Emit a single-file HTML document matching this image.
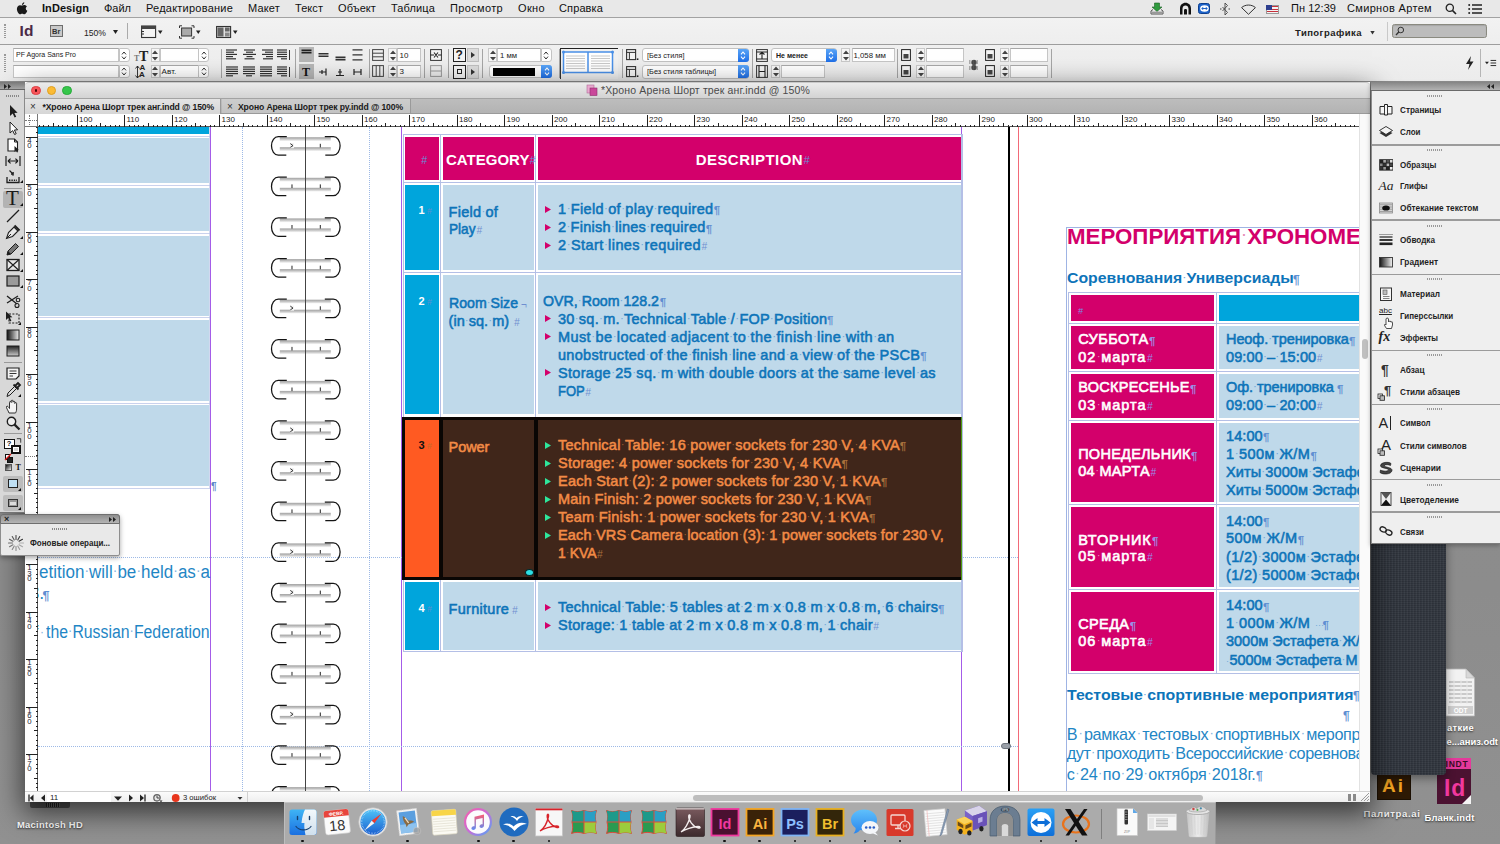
<!DOCTYPE html>
<html><head><meta charset="utf-8"><title>InDesign</title>
<style>
*{box-sizing:border-box;margin:0;padding:0}
html,body{width:1500px;height:844px;overflow:hidden}
body{position:relative;font-family:"Liberation Sans",sans-serif;background:#8d8d8d;color:#222}
.a{position:absolute}
.t{position:absolute;white-space:pre;line-height:1}
.b{font-weight:bold}
.h i{position:relative;font-style:normal}
.h i::after{content:"·";position:absolute;left:-2px;right:-2px;top:0;text-align:center;color:var(--d);letter-spacing:0;font-weight:normal;-webkit-text-stroke:0;font-size:.8em;line-height:1.25}
svg{position:absolute;overflow:visible}
/* desktop */
#desk{left:0;top:0;width:1500px;height:844px;background:linear-gradient(180deg,#8a8a8a 0%,#8c8c8c 70%,#919191 100%)}
/* menubar */
#menubar{left:0;top:0;width:1500px;height:17.5px;background:#e8e8e8;border-bottom:1px solid #a2a2a2}
#menubar .t{top:3px;font-size:11px;color:#1a1a1a}
#appbar{left:0;top:17.5px;width:1500px;height:27.5px;background:linear-gradient(#f2f2f2,#eeeeee);border-bottom:1px solid #9d9d9d}
#ctrl{left:0;top:45px;width:1500px;height:37px;background:linear-gradient(#f0f0f0,#ececec);border-bottom:1px solid #8e8e8e}
.fld{position:absolute;background:#fff;border:1px solid #c6c6c6;border-top-color:#a8a8a8;height:14px}
.sep{position:absolute;width:1px;background:#a5a5a5;top:49px;height:29px}
.stp{position:absolute;width:11px;height:13px;background:#fff;border:1px solid #c4c4c4;border-radius:0 3px 3px 0}
.bstp{position:absolute;width:11px;height:13px;background:linear-gradient(#5aa5f7,#1f6fe8);border-radius:0 3px 3px 0}
.dd{position:absolute;height:13px;background:#fff;border:1px solid #c2c2c2;border-radius:3px}
</style></head><body>
<div id="desk" class="a"></div>

<div id="menubar" class="a">
<span class="t" style='left:42.0px;top:3.00px;font-size:11px;color:#111;font-weight:bold;letter-spacing:0.068px;'>InDesign</span>
<span class="t" style='left:104.0px;top:3.00px;font-size:11px;color:#111;letter-spacing:-0.012px;'>Файл</span>
<span class="t" style='left:146.0px;top:3.00px;font-size:11px;color:#111;letter-spacing:0.229px;'>Редактирование</span>
<span class="t" style='left:248.0px;top:3.00px;font-size:11px;color:#111;letter-spacing:0.172px;'>Макет</span>
<span class="t" style='left:295.0px;top:3.00px;font-size:11px;color:#111;letter-spacing:0.059px;'>Текст</span>
<span class="t" style='left:338.0px;top:3.00px;font-size:11px;color:#111;letter-spacing:0.089px;'>Объект</span>
<span class="t" style='left:391.0px;top:3.00px;font-size:11px;color:#111;letter-spacing:0.123px;'>Таблица</span>
<span class="t" style='left:450.0px;top:3.00px;font-size:11px;color:#111;letter-spacing:0.344px;'>Просмотр</span>
<span class="t" style='left:518.0px;top:3.00px;font-size:11px;color:#111;letter-spacing:0.359px;'>Окно</span>
<span class="t" style='left:559.0px;top:3.00px;font-size:11px;color:#111;letter-spacing:0.121px;'>Справка</span>
<span class="t" style='left:1291.0px;top:3.00px;font-size:11px;color:#111;letter-spacing:0.053px;'>Пн 12:39</span>
<span class="t" style='left:1347.0px;top:3.00px;font-size:11px;color:#111;letter-spacing:0.333px;'>Смирнов Артем</span>
</div>
<div id="appbar" class="a"></div>
<div id="ctrl" class="a"></div>
<div class="a" style="left:30px;top:800px;width:40px;height:8px;background:#4d4d4d;border-radius:2px"></div><div class="a" style="left:46px;top:803px;width:14px;height:4px;background:repeating-linear-gradient(90deg,#222 0 1px,#666 1px 2px)"></div>
<span class="t" style='left:17.0px;top:820.00px;font-size:9.4px;color:#fff;font-weight:bold;letter-spacing:0.290px;text-shadow:0 1px 2px rgba(0,0,0,.7);'>Macintosh HD</span>
<svg style="left:1446px;top:669px" width="29" height="48" viewBox="0 0 29 48"><path d="M0 0H20L28.500 9V47H0Z" fill="#f2f2f2" stroke="#b5b5b5" stroke-width=".8"/><path d="M20 0V9H28.500Z" fill="#d8d8d8" stroke="#b5b5b5" stroke-width=".6"/><g stroke="#bdbdbd" stroke-width="1.600"><path d="M3 13H26M3 17H26M3 21H26M3 25H26M3 29H26M3 33H26"/></g><g stroke="#e9e9e9" stroke-width="1"><path d="M8 11V35M15 11V35M21 11V35"/></g><rect x="2" y="37" width="25" height="8" fill="#cfcfcf"/><text x="14.500" y="43.600" font-family="Liberation Sans" font-size="6.500" font-weight="bold" fill="#fff" text-anchor="middle">ODT</text></svg>
<span class="t" style='left:1447.0px;top:723.00px;font-size:9.4px;color:#fff;font-weight:bold;letter-spacing:0.303px;text-shadow:0 1px 2px rgba(0,0,0,.7);'>аткие</span>
<span class="t" style='left:1446.5px;top:737.00px;font-size:9.4px;color:#fff;font-weight:bold;letter-spacing:-0.001px;text-shadow:0 1px 2px rgba(0,0,0,.7);'>е...аниз.odt</span>
<div class="a" style="left:1377px;top:762px;width:34px;height:38px;background:#2e1a05;border:1px solid #1c1003"></div>
<span class="t" style='left:1382.0px;top:776.00px;font-size:19px;color:#f5a623;font-weight:bold;letter-spacing:2.000px;'>Ai</span>
<span class="t" style='left:1363.5px;top:809.00px;font-size:9.6px;color:#f0f0f0;font-weight:bold;letter-spacing:0.620px;text-shadow:0 1px 2px rgba(0,0,0,.7);'>Палитра.ai</span>
<div class="a" style="left:1437px;top:758px;width:34px;height:46px;background:#4b1231"></div><div class="a" style="left:1437px;top:758px;width:34px;height:11px;background:#e5399b"></div>
<span class="t" style='left:1445.5px;top:760.00px;font-size:8.5px;color:#3a0d25;font-weight:bold;letter-spacing:0.789px;'>INDT</span>
<span class="t" style='left:1444.0px;top:777.00px;font-size:23px;color:#f0389e;font-weight:bold;letter-spacing:0.773px;'>Id</span>
<svg style="left:1462px;top:795px" width="9" height="9" viewBox="0 0 9 9"><path d="M0 9L9 0V9Z" fill="#f4f4f4"/></svg>
<div class="a" style="left:1371px;top:540px;width:75px;height:235px;background:#30353d;border-radius:0 0 4px 4px;box-shadow:0 3px 10px rgba(0,0,0,.4);background-image:repeating-linear-gradient(90deg,rgba(255,255,255,.035) 0 1px,rgba(0,0,0,.05) 1px 2px,rgba(255,255,255,0) 2px 3px),repeating-linear-gradient(0deg,rgba(255,255,255,.03) 0 1px,rgba(0,0,0,.04) 1px 2px)"></div>
<span class="t" style='left:1424.5px;top:813.00px;font-size:9.4px;color:#fff;font-weight:bold;letter-spacing:0.195px;text-shadow:0 1px 2px rgba(0,0,0,.7);'>Бланк.indt</span>
<div class="a" style="left:4px;top:24px;width:2px;height:14px;border-left:1px dotted #999;border-right:1px dotted #999"></div><span class="t" style='left:19.5px;top:23.00px;font-size:15.5px;color:#4a2a47;font-weight:bold;letter-spacing:0.109px;'>Id</span><div class="a" style="left:50px;top:25px;width:13px;height:12px;background:#c9c9c9;border:1px solid #6d6d6d"></div><span class="t" style='left:52.0px;top:28.00px;font-size:7.5px;color:#333;font-weight:bold;'>Br</span><span class="t" style='left:84.0px;top:28.00px;font-size:9.5px;color:#222;transform:scaleX(0.9049);transform-origin:0 0;'>150%</span><svg style="left:112.5px;top:30px" width="5" height="4" viewBox="0 0 5 4"><path d="M0 0H5L2.5 4Z" fill="#222"/></svg><div class="a" style="left:127px;top:23px;width:1px;height:16px;background:#aaa;"></div><svg style="left:141px;top:24.5px" width="22" height="14" viewBox="0 0 22 14"><rect x=".6" y="1" width="14" height="11.5" fill="#f4f4f4" stroke="#333" stroke-width="1.1"/><rect x=".6" y="1" width="14" height="3" fill="#444"/><path d="M.6 6.5H3M.6 9H3" stroke="#333" stroke-width="1"/><path d="M17 5.5H21.5L19.25 9Z" fill="#222"/></svg><svg style="left:179px;top:24.5px" width="22" height="14" viewBox="0 0 22 14"><rect x="2.6" y="3" width="10" height="8" fill="#aaa" stroke="#333" stroke-width="1"/><path d="M.5 3V.8H3M12.5 .8H15V3M15 11V13.2H12.5M3 13.2H.5V11" fill="none" stroke="#333" stroke-width="1"/><path d="M17 5.5H21.5L19.25 9Z" fill="#222"/></svg><svg style="left:216px;top:24.5px" width="22" height="14" viewBox="0 0 22 14"><rect x=".6" y="1.5" width="14" height="11" fill="#e0e0e0" stroke="#333" stroke-width="1.1"/><rect x="1.5" y="2.5" width="6" height="9" fill="#666"/><rect x="9" y="2.5" width="4.6" height="4" fill="#666"/><rect x="9" y="7.6" width="4.6" height="3.9" fill="#888"/><path d="M17 5.5H21.5L19.25 9Z" fill="#222"/></svg><span class="t" style='left:1295.0px;top:28.00px;font-size:9.5px;color:#222;font-weight:bold;letter-spacing:0.449px;'>Типографика</span><svg style="left:1369.5px;top:30.5px" width="5" height="3.5" viewBox="0 0 5 4"><path d="M0 0H5L2.5 4Z" fill="#333"/></svg><div class="a" style="left:1386.5px;top:22px;width:1px;height:19px;background:#c9c9c9;"></div><div class="a" style="left:1392px;top:24px;width:95px;height:14px;background:#bcbcbc;border:1px solid #8a8a80;border-radius:2.5px;box-shadow:inset 0 1px 1px rgba(0,0,0,.12)"></div><svg style="left:1395px;top:26px" width="10" height="10" viewBox="0 0 10 10"><circle cx="5.8" cy="4" r="2.8" fill="none" stroke="#333" stroke-width="1"/><path d="M3.8 6L1 9" stroke="#333" stroke-width="1.3"/></svg>
<svg style="left:15.5px;top:2px" width="12" height="13" viewBox="0 0 12 13"><path d="M8.3 0.2C8.4 1.5 7.3 2.9 6 2.9C5.8 1.6 7 0.3 8.3 0.2ZM6.1 3.6C6.8 3.6 7.6 3 8.6 3.1C9.6 3.2 10.4 3.7 10.9 4.5C9.2 5.6 9.5 8 11.3 8.7C10.8 10.2 9.6 12.3 8.3 12.3C7.5 12.3 7.2 11.8 6.2 11.8C5.2 11.8 4.8 12.3 4.1 12.3C2.7 12.3 0.9 9.4 0.9 7C0.9 4.5 2.5 3.2 4 3.2C4.9 3.2 5.6 3.6 6.1 3.6Z" fill="#1a1a1a"/></svg><svg style="left:1150px;top:2px" width="14" height="13" viewBox="0 0 14 13"><path d="M4.5 1H9.5V5H12L7 9.5L2 5H4.5Z" fill="#2f9a3e" stroke="#1c5e25" stroke-width=".6"/><path d="M1 9L3 7.5M13 9L11 7.5M1 9V12H13V9" stroke="#555" stroke-width="1" fill="none"/><rect x="1.5" y="9.6" width="11" height="2" fill="#999"/></svg><svg style="left:1178.5px;top:2px" width="13" height="13" viewBox="0 0 13 13"><path d="M1 12.5V6.5C1 3 3.5 .8 6.5 .8C9.5 .8 12 3 12 6.5V12.5H9.5V6.8C9.5 4.6 8.2 3.4 6.5 3.4C4.8 3.4 3.5 4.6 3.5 6.8V12.5Z" fill="#111"/><path d="M5 12.5V8C5 6.5 8 6.5 8 8V12.5Z" fill="#111"/></svg><div class="a" style="left:1198px;top:3px;width:12px;height:11px;background:#1d63c9;border:1px solid #0d3f8e;border-radius:2.5px"></div><svg style="left:1199.5px;top:5px" width="9" height="7" viewBox="0 0 9 7"><ellipse cx="4.5" cy="3.5" rx="4.3" ry="3.3" fill="#fff"/><path d="M1.2 3.5L3.2 1.8V2.9H5.8V1.8L7.8 3.5L5.8 5.2V4.1H3.2V5.2Z" fill="#1d63c9"/></svg><svg style="left:1220px;top:3px" width="10" height="12" viewBox="0 0 10 12"><path d="M5 0V12M5 0L7.5 2.5L2.5 8M5 12L7.5 9.5L2.5 4" fill="none" stroke="#444" stroke-width=".9"/><path d="M0 6H1.5M8.5 6H10" stroke="#444" stroke-width="1"/></svg><svg style="left:1240.5px;top:3.5px" width="15" height="11" viewBox="0 0 15 11"><path d="M7.5 10.3L.6 3.6C4.3 .2 10.7 .2 14.4 3.6Z" fill="none" stroke="#333" stroke-width="1"/></svg><div class="a" style="left:1265.5px;top:4.5px;width:13.5px;height:9px;background:repeating-linear-gradient(#c8313c 0 1.3px,#f4f4f4 1.3px 2.6px);border:.5px solid #999"></div><div class="a" style="left:1265.5px;top:4.5px;width:6px;height:5px;background:#2d3f8f"></div><svg style="left:1444.5px;top:3px" width="12" height="12" viewBox="0 0 12 12"><circle cx="4.8" cy="4.8" r="3.6" fill="none" stroke="#222" stroke-width="1.3"/><path d="M7.4 7.4L11 11" stroke="#222" stroke-width="1.6"/></svg><svg style="left:1468px;top:4px" width="14" height="10" viewBox="0 0 14 10"><path d="M4 1H14M4 5H14M4 9H14" stroke="#222" stroke-width="1.5"/><circle cx="1.2" cy="1" r="1" fill="#222"/><circle cx="1.2" cy="5" r="1" fill="#222"/><circle cx="1.2" cy="9" r="1" fill="#222"/></svg>
<div class="a" style="left:4px;top:54px;width:2px;height:18px;border-left:1px dotted #999;border-right:1px dotted #999"></div><div class="fld" style="left:13px;top:48.3px;width:106px;height:13.5px"></div><div class="stp" style="left:118.5px;top:48.3px;height:13.5px"></div><svg style="left:121px;top:50.5px" width="6" height="9" viewBox="0 0 6 9"><path d="M1 3.4L3 1L5 3.4M1 5.6L3 8L5 5.6" fill="none" stroke="#333" stroke-width="1"/></svg><div class="fld" style="left:13px;top:64.6px;width:106px;height:13.5px"></div><div class="stp" style="left:118.5px;top:64.6px;height:13.5px"></div><svg style="left:121px;top:66.8px" width="6" height="9" viewBox="0 0 6 9"><path d="M1 3.4L3 1L5 3.4M1 5.6L3 8L5 5.6" fill="none" stroke="#333" stroke-width="1"/></svg><span class="t" style='left:15.5px;top:51.00px;font-size:8px;color:#222;transform:scaleX(0.8761);transform-origin:0 0;'>PF Agora Sans Pro</span><span class="t" style="left:134px;top:54.5px;font-family:'Liberation Serif';font-size:8px;font-weight:bold;color:#777">T</span><span class="t" style="left:139px;top:50px;font-family:'Liberation Serif';font-size:14px;font-weight:bold;color:#222">T</span><span class="t" style="left:139.5px;top:63.5px;font-size:8px;font-weight:bold;color:#222">A</span><span class="t" style="left:139px;top:70.5px;font-size:8px;font-weight:bold;color:#222">A</span><svg style="left:135px;top:66px" width="5" height="12" viewBox="0 0 5 12"><path d="M2.5 0V12M.5 2.5L2.5 0L4.5 2.5M.5 9.5L2.5 12L4.5 9.5" fill="none" stroke="#222" stroke-width=".9"/></svg><div class="a" style="left:150.5px;top:48.3px;width:9px;height:13.5px;background:#f6f6f6;border:1px solid #c9c9c9"></div><svg style="left:152px;top:49.6px" width="6" height="11" viewBox="0 0 6 11"><path d="M0 4H6L3 .5ZM0 7H6L3 10.5Z" fill="#444"/></svg><div class="fld" style="left:159.5px;top:48.3px;width:39px;height:13.5px"></div><div class="stp" style="left:198px;top:48.3px;height:13.5px"></div><svg style="left:200.5px;top:50.5px" width="6" height="9" viewBox="0 0 6 9"><path d="M1 3.4L3 1L5 3.4M1 5.6L3 8L5 5.6" fill="none" stroke="#333" stroke-width="1"/></svg><div class="a" style="left:150.5px;top:64.6px;width:9px;height:13.5px;background:#f6f6f6;border:1px solid #c9c9c9"></div><svg style="left:152px;top:65.9px" width="6" height="11" viewBox="0 0 6 11"><path d="M0 4H6L3 .5ZM0 7H6L3 10.5Z" fill="#444"/></svg><div class="fld" style="left:159.5px;top:64.6px;width:39px;height:13.5px"></div><div class="stp" style="left:198px;top:64.6px;height:13.5px"></div><svg style="left:200.5px;top:66.8px" width="6" height="9" viewBox="0 0 6 9"><path d="M1 3.4L3 1L5 3.4M1 5.6L3 8L5 5.6" fill="none" stroke="#333" stroke-width="1"/></svg><span class="t" style='left:161.5px;top:68.00px;font-size:8px;color:#222;letter-spacing:0.145px;'>Авт.</span><div class="sep" style="left:220.5px"></div><div class="sep" style="left:294.5px"></div><div class="sep" style="left:368.5px"></div><div class="sep" style="left:423.5px"></div><div class="sep" style="left:447.5px"></div><div class="sep" style="left:482px"></div><div class="sep" style="left:559px"></div><div class="sep" style="left:621.5px"></div><div class="sep" style="left:752px"></div><div class="sep" style="left:897px"></div><div class="sep" style="left:1051px"></div><svg style="left:225.5px;top:49px" width="13" height="11" viewBox="0 0 13 11"><path d="M0 1H11" stroke="#333" stroke-width="1.2"/><path d="M0 3.2H8" stroke="#333" stroke-width="1.2"/><path d="M0 5.4H11" stroke="#333" stroke-width="1.2"/><path d="M0 7.6H7" stroke="#333" stroke-width="1.2"/><path d="M0 9.8H10" stroke="#333" stroke-width="1.2"/></svg><svg style="left:242.5px;top:49px" width="13" height="11" viewBox="0 0 13 11"><path d="M1 1H12" stroke="#333" stroke-width="1.2"/><path d="M3 3.2H10" stroke="#333" stroke-width="1.2"/><path d="M0 5.4H13" stroke="#333" stroke-width="1.2"/><path d="M3.5 7.6H9.5" stroke="#333" stroke-width="1.2"/><path d="M1.5 9.8H11.5" stroke="#333" stroke-width="1.2"/></svg><svg style="left:259.5px;top:49px" width="13" height="11" viewBox="0 0 13 11"><path d="M2 1H13" stroke="#333" stroke-width="1.2"/><path d="M5 3.2H13" stroke="#333" stroke-width="1.2"/><path d="M2 5.4H13" stroke="#333" stroke-width="1.2"/><path d="M6 7.6H13" stroke="#333" stroke-width="1.2"/><path d="M3 9.8H13" stroke="#333" stroke-width="1.2"/></svg><svg style="left:276.5px;top:49px" width="13" height="11" viewBox="0 0 13 11"><path d="M0 1H10" stroke="#333" stroke-width="1.2"/><path d="M0 3.2H10" stroke="#333" stroke-width="1.2"/><path d="M0 5.4H10" stroke="#333" stroke-width="1.2"/><path d="M0 7.6H10" stroke="#333" stroke-width="1.2"/><path d="M4 9.8H10" stroke="#333" stroke-width="1.2"/></svg><div class="a" style="left:289px;top:49.5px;width:1.2px;height:10px;background:#333;"></div><svg style="left:225.5px;top:66px" width="13" height="11" viewBox="0 0 13 11"><path d="M0 1H12" stroke="#333" stroke-width="1.2"/><path d="M0 3.2H12" stroke="#333" stroke-width="1.2"/><path d="M0 5.4H12" stroke="#333" stroke-width="1.2"/><path d="M0 7.6H12" stroke="#333" stroke-width="1.2"/><path d="M0 9.8H7" stroke="#333" stroke-width="1.2"/></svg><svg style="left:242.5px;top:66px" width="13" height="11" viewBox="0 0 13 11"><path d="M0 1H12" stroke="#333" stroke-width="1.2"/><path d="M0 3.2H12" stroke="#333" stroke-width="1.2"/><path d="M0 5.4H12" stroke="#333" stroke-width="1.2"/><path d="M0 7.6H12" stroke="#333" stroke-width="1.2"/><path d="M3 9.8H9" stroke="#333" stroke-width="1.2"/></svg><svg style="left:259.5px;top:66px" width="13" height="11" viewBox="0 0 13 11"><path d="M0 1H12" stroke="#333" stroke-width="1.2"/><path d="M0 3.2H12" stroke="#333" stroke-width="1.2"/><path d="M0 5.4H12" stroke="#333" stroke-width="1.2"/><path d="M0 7.6H12" stroke="#333" stroke-width="1.2"/><path d="M0 9.8H12" stroke="#333" stroke-width="1.2"/></svg><svg style="left:276.5px;top:66px" width="13" height="11" viewBox="0 0 13 11"><path d="M0 1H10" stroke="#333" stroke-width="1.2"/><path d="M0 3.2H10" stroke="#333" stroke-width="1.2"/><path d="M0 5.4H10" stroke="#333" stroke-width="1.2"/><path d="M0 7.6H10" stroke="#333" stroke-width="1.2"/><path d="M4 9.8H10" stroke="#333" stroke-width="1.2"/></svg><div class="a" style="left:289px;top:66.5px;width:1.2px;height:10px;background:#333;"></div><div class="a" style="left:298.5px;top:47px;width:15.5px;height:14.5px;background:#b6b6b6;"></div><div class="a" style="left:298.5px;top:64px;width:15.5px;height:14.5px;background:#b6b6b6;"></div><svg style="left:300px;top:49px" width="70" height="12" viewBox="0 0 70 12"><path d="M1.5 1.2H11.5M1.5 3.6H11.5" stroke="#222" stroke-width="1.6"/><path d="M18.5 4.8H28.500M18.5 7.2H28.5" stroke="#333" stroke-width="1.5"/><path d="M35.500 8.400H45.5M35.5 10.800H45.5" stroke="#333" stroke-width="1.6"/><path d="M52.5 .8H62.5M52.5 5.8H62.5M52.5 10.800H62.5" stroke="#333" stroke-width="1.3"/></svg><span class="t" style="left:302px;top:66px;font-family:'Liberation Serif';font-size:12px;font-weight:bold;color:#111">T</span><svg style="left:317px;top:66px" width="50" height="12" viewBox="0 0 50 12"><path d="M2 6H9M9 2.500V9.500M5 4V8" stroke="#222" stroke-width="1.2"/><path d="M19 9.500H27M23 3V9.500M21 6H25" stroke="#222" stroke-width="1.2"/><path d="M37 3V9M37 6H44M44 3V9" stroke="#222" stroke-width="1.2"/></svg><svg style="left:372px;top:48.5px" width="12" height="12" viewBox="0 0 12 12"><rect x=".6" y=".6" width="10.800" height="10.800" fill="#f0f0f0" stroke="#444" stroke-width="1"/><path d="M.6 4.200H11.400M.6 7.800H11.400" stroke="#444" stroke-width="1"/></svg><svg style="left:372px;top:65px" width="12" height="12" viewBox="0 0 12 12"><rect x=".6" y=".6" width="10.800" height="10.800" fill="#f0f0f0" stroke="#444" stroke-width="1"/><path d="M4.200 .6V11.400M7.800 .6V11.400" stroke="#444" stroke-width="1"/></svg><div class="a" style="left:388px;top:48.3px;width:9px;height:13.5px;background:#f6f6f6;border:1px solid #c9c9c9"></div><svg style="left:389.5px;top:49.6px" width="6" height="11" viewBox="0 0 6 11"><path d="M0 4H6L3 .5ZM0 7H6L3 10.5Z" fill="#444"/></svg><div class="fld" style="left:397px;top:48.3px;width:23.5px;height:13.5px"></div><div class="a" style="left:388px;top:64.6px;width:9px;height:13.5px;background:#f6f6f6;border:1px solid #c9c9c9"></div><svg style="left:389.5px;top:65.9px" width="6" height="11" viewBox="0 0 6 11"><path d="M0 4H6L3 .5ZM0 7H6L3 10.5Z" fill="#444"/></svg><div class="fld" style="left:397px;top:64.6px;width:23.5px;height:13.5px"></div><span class="t" style='left:399.5px;top:52.00px;font-size:8px;color:#222;'>10</span><span class="t" style='left:399.5px;top:68.00px;font-size:8px;color:#222;'>3</span><svg style="left:430px;top:48.500px" width="12" height="12" viewBox="0 0 12 12"><rect x=".6" y=".6" width="10.800" height="10.800" fill="#f4f4f4" stroke="#333" stroke-width="1"/><path d="M.6 6H4M8 6H11.400M4 3.500L8 8.500M8 3.500L4 8.500" stroke="#222" stroke-width="1.100"/></svg><svg style="left:430px;top:65px" width="12" height="12" viewBox="0 0 12 12"><rect x=".6" y=".6" width="10.800" height="10.800" fill="#ececec" stroke="#999" stroke-width="1"/><path d="M.6 6H11.400" stroke="#999" stroke-width="1"/></svg><div class="a" style="left:452.500px;top:47.500px;width:13px;height:14px;background:#f4f4f4;border:1.3px solid #222"></div><span class="t" style="left:455.5px;top:48.500px;font-size:12px;font-weight:bold;color:#222">?</span><div class="a" style="left:452.500px;top:64.500px;width:13px;height:14px;background:#f4f4f4;border:1.3px solid #222"></div><div class="a" style="left:456.500px;top:69px;width:5px;height:5px;border:1px solid #222"></div><div class="a" style="left:466.5px;top:47.5px;width:12px;height:14.5px;background:#dcdcdc;border:1px solid #c0c0c0"></div><div class="a" style="left:466.5px;top:64.5px;width:12px;height:14.5px;background:#dcdcdc;border:1px solid #c0c0c0"></div><svg style="left:471px;top:51.500px" width="4" height="6" viewBox="0 0 4 6"><path d="M0 0L4 3L0 6Z" fill="#333"/></svg><svg style="left:471px;top:68.500px" width="4" height="6" viewBox="0 0 4 6"><path d="M0 0L4 3L0 6Z" fill="#333"/></svg><div class="a" style="left:488px;top:48.3px;width:9px;height:13.5px;background:#f6f6f6;border:1px solid #c9c9c9"></div><svg style="left:489.5px;top:49.6px" width="6" height="11" viewBox="0 0 6 11"><path d="M0 4H6L3 .5ZM0 7H6L3 10.5Z" fill="#444"/></svg><div class="fld" style="left:497px;top:48.3px;width:44px;height:13.5px"></div><div class="stp" style="left:540.5px;top:48.3px;height:13.5px"></div><svg style="left:543px;top:50.5px" width="6" height="9" viewBox="0 0 6 9"><path d="M1 3.4L3 1L5 3.4M1 5.6L3 8L5 5.6" fill="none" stroke="#333" stroke-width="1"/></svg><span class="t" style='left:499.5px;top:52.00px;font-size:8px;color:#222;transform:scaleX(0.9620);transform-origin:0 0;'>1 мм</span><div class="dd" style="left:489px;top:65px;width:62.500px;height:13px"></div><div class="a" style="left:493px;top:67.5px;width:42px;height:8px;background:#000;"></div><div class="bstp" style="left:541px;top:65px"></div><svg style="left:543.5px;top:67px" width="6" height="9" viewBox="0 0 6 9"><path d="M1 3.4L3 1L5 3.4M1 5.6L3 8L5 5.6" fill="none" stroke="#fff" stroke-width="1.1"/></svg><div class="a" style="left:559.500px;top:47.500px;width:58px;height:31px;background:#f1f1f1;border-top:1.5px solid #222;border-left:1.500px solid #333"></div><svg style="left:562px;top:50px" width="53" height="26" viewBox="0 0 53 26"><rect x="1.500" y="2" width="49" height="20.500" fill="#fff" stroke="#4a90e8" stroke-width="1.500"/><path d="M26 2V22.500" stroke="#4a90e8" stroke-width="1.500"/><path d="M4 6H23M4 8.500H23M4 11H23M4 13.500H23M4 16H23M4 18.500H23M29 6H48M29 8.500H48M29 11H48M29 13.500H48M29 16H48M29 18.500H48" stroke="#c9c9c9" stroke-width="1"/><circle cx="1.500" cy="2" r="1.500" fill="#4a90e8"/><circle cx="50.500" cy="2" r="1.500" fill="#4a90e8"/><circle cx="1.500" cy="22.500" r="1.500" fill="#4a90e8"/><circle cx="50.500" cy="22.500" r="1.500" fill="#4a90e8"/></svg><svg style="left:626px;top:49px" width="13" height="12" viewBox="0 0 13 12"><rect x=".6" y=".6" width="9" height="10" fill="#f4f4f4" stroke="#333" stroke-width="1.100"/><path d="M.6 3.400H9.600M3.400 3.400V10.600" stroke="#333" stroke-width="1"/><rect x="10.800" y="9.400" width="1.600" height="1.600" fill="#222"/></svg><svg style="left:626px;top:65.5px" width="13" height="12" viewBox="0 0 13 12"><rect x=".6" y=".6" width="9" height="10" fill="#f4f4f4" stroke="#333" stroke-width="1.100"/><path d="M.6 3.400H9.600M3.400 3.400V10.600" stroke="#333" stroke-width="1"/><rect x="10.800" y="9.400" width="1.600" height="1.600" fill="#222"/></svg><div class="dd" style="left:641.500px;top:48px;width:107px;height:14px"></div><div class="bstp" style="left:737.5px;top:48.5px"></div><svg style="left:740px;top:50.5px" width="6" height="9" viewBox="0 0 6 9"><path d="M1 3.4L3 1L5 3.4M1 5.6L3 8L5 5.6" fill="none" stroke="#fff" stroke-width="1.1"/></svg><div class="dd" style="left:641.500px;top:64.500px;width:107px;height:14px"></div><div class="bstp" style="left:737.5px;top:65px"></div><svg style="left:740px;top:67px" width="6" height="9" viewBox="0 0 6 9"><path d="M1 3.4L3 1L5 3.4M1 5.6L3 8L5 5.6" fill="none" stroke="#fff" stroke-width="1.1"/></svg><span class="t" style='left:647.0px;top:52.00px;font-size:7.8px;color:#222;transform:scaleX(0.9386);transform-origin:0 0;'>[Без стиля]</span><span class="t" style='left:647.0px;top:68.00px;font-size:7.8px;color:#222;transform:scaleX(0.9448);transform-origin:0 0;'>[Без стиля таблицы]</span><svg style="left:755.500px;top:48.500px" width="12" height="13" viewBox="0 0 12 13"><rect x=".6" y=".6" width="10.800" height="11.800" fill="#f4f4f4" stroke="#333" stroke-width="1"/><path d="M.6 3H11.400M.6 10H11.400M6 3.500V9.500M3.500 5.500L6 3.500L8.500 5.500" stroke="#222" stroke-width="1.100" fill="none"/></svg><svg style="left:755.500px;top:65px" width="12" height="13" viewBox="0 0 12 13"><rect x=".6" y=".6" width="10.800" height="11.800" fill="#f4f4f4" stroke="#333" stroke-width="1"/><path d="M3 .6V12.400M9 .6V12.400M3.500 6.500H8.500" stroke="#222" stroke-width="1.100" fill="none"/></svg><div class="dd" style="left:770.500px;top:48px;width:66px;height:14px"></div><div class="bstp" style="left:825.5px;top:48.5px"></div><svg style="left:828px;top:50.5px" width="6" height="9" viewBox="0 0 6 9"><path d="M1 3.4L3 1L5 3.4M1 5.6L3 8L5 5.6" fill="none" stroke="#fff" stroke-width="1.1"/></svg><span class="t" style='left:775.5px;top:52.00px;font-size:7.8px;color:#222;font-weight:bold;transform:scaleX(0.8982);transform-origin:0 0;'>Не менее</span><div class="a" style="left:841px;top:48.3px;width:9px;height:13.5px;background:#f6f6f6;border:1px solid #c9c9c9"></div><svg style="left:842.5px;top:49.6px" width="6" height="11" viewBox="0 0 6 11"><path d="M0 4H6L3 .5ZM0 7H6L3 10.5Z" fill="#444"/></svg><div class="fld" style="left:851.5px;top:48.3px;width:43px;height:13.5px"></div><span class="t" style='left:853.5px;top:52.00px;font-size:7.8px;color:#222;letter-spacing:0.012px;'>1,058 мм</span><div class="a" style="left:771px;top:64.6px;width:9px;height:13.5px;background:#f6f6f6;border:1px solid #c9c9c9"></div><svg style="left:772.5px;top:65.9px" width="6" height="11" viewBox="0 0 6 11"><path d="M0 4H6L3 .5ZM0 7H6L3 10.5Z" fill="#444"/></svg><div class="fld" style="left:780.5px;top:64.6px;width:44px;height:13.5px"></div><svg style="left:901px;top:49px" width="10" height="12" viewBox="0 0 10 12"><rect x=".6" y=".6" width="8.800" height="10.800" fill="#f4f4f4" stroke="#222" stroke-width="1"/><rect x="2.500" y="5" width="5" height="4.500" fill="#444"/></svg><div class="a" style="left:916px;top:48.3px;width:9px;height:13.5px;background:#f6f6f6;border:1px solid #c9c9c9"></div><svg style="left:917.5px;top:49.6px" width="6" height="11" viewBox="0 0 6 11"><path d="M0 4H6L3 .5ZM0 7H6L3 10.5Z" fill="#444"/></svg><div class="fld" style="left:925.5px;top:48.3px;width:38px;height:13.5px"></div><svg style="left:901px;top:65.3px" width="10" height="12" viewBox="0 0 10 12"><rect x=".6" y=".6" width="8.800" height="10.800" fill="#f4f4f4" stroke="#222" stroke-width="1"/><rect x="2.500" y="5" width="5" height="4.500" fill="#444"/></svg><div class="a" style="left:916px;top:64.6px;width:9px;height:13.5px;background:#f6f6f6;border:1px solid #c9c9c9"></div><svg style="left:917.5px;top:65.9px" width="6" height="11" viewBox="0 0 6 11"><path d="M0 4H6L3 .5ZM0 7H6L3 10.5Z" fill="#444"/></svg><div class="fld" style="left:925.5px;top:64.6px;width:38px;height:13.5px"></div><svg style="left:985px;top:49px" width="10" height="12" viewBox="0 0 10 12"><rect x=".6" y=".6" width="8.800" height="10.800" fill="#f4f4f4" stroke="#222" stroke-width="1"/><rect x="2.500" y="5" width="5" height="4.500" fill="#444"/></svg><div class="a" style="left:1000px;top:48.3px;width:9px;height:13.5px;background:#f6f6f6;border:1px solid #c9c9c9"></div><svg style="left:1001.5px;top:49.6px" width="6" height="11" viewBox="0 0 6 11"><path d="M0 4H6L3 .5ZM0 7H6L3 10.5Z" fill="#444"/></svg><div class="fld" style="left:1009.5px;top:48.3px;width:38px;height:13.5px"></div><svg style="left:985px;top:65.3px" width="10" height="12" viewBox="0 0 10 12"><rect x=".6" y=".6" width="8.800" height="10.800" fill="#f4f4f4" stroke="#222" stroke-width="1"/><rect x="2.500" y="5" width="5" height="4.500" fill="#444"/></svg><div class="a" style="left:1000px;top:64.6px;width:9px;height:13.5px;background:#f6f6f6;border:1px solid #c9c9c9"></div><svg style="left:1001.5px;top:65.9px" width="6" height="11" viewBox="0 0 6 11"><path d="M0 4H6L3 .5ZM0 7H6L3 10.5Z" fill="#444"/></svg><div class="fld" style="left:1009.5px;top:64.6px;width:38px;height:13.5px"></div><svg style="left:968px;top:58.500px" width="12" height="12" viewBox="0 0 12 12"><ellipse cx="6" cy="3.500" rx="2.600" ry="2.800" fill="#555"/><ellipse cx="6" cy="8.500" rx="2.600" ry="2.800" fill="#555"/><path d="M1 2H11M1 4H11M1 8H11M1 10H11" stroke="#333" stroke-width=".7" stroke-dasharray="1.500 1"/></svg><svg style="left:1464.5px;top:56px" width="9" height="14" viewBox="0 0 9 14"><path d="M6 0L1 8H4.500L3 14L8.500 5.500H5Z" fill="#222"/></svg><div class="a" style="left:1480px;top:49px;width:1px;height:28px;background:#b5b5b5;"></div><svg style="left:1484.5px;top:58.500px" width="12" height="8" viewBox="0 0 14 8"><path d="M0 2.500H4.500L2.250 5.500Z" fill="#222"/><path d="M6.500 1H13M6.500 4H13M6.500 7H13" stroke="#222" stroke-width="1.100"/></svg>
<div class="a" style="left:25px;top:82px;width:1345px;height:720px;background:#fff;box-shadow:0 9px 26px 2px rgba(0,0,0,.62)"></div>
<div class="a" style="left:25px;top:82px;width:1345px;height:16px;background:linear-gradient(#ebebeb,#d3d3d3);border-top:1px solid #c9c9c9;border-radius:4px 4px 0 0"></div>
<div class="a" style="left:31.2px;top:85.9px;width:9.6px;height:9.6px;border-radius:50%;background:#f8555a;border:0.5px solid #dc4045"></div><div class="a" style="left:34.6px;top:89.400px;width:2.800px;height:2.800px;border-radius:50%;background:#4a0608"></div>
<div class="a" style="left:46.8px;top:85.9px;width:9.6px;height:9.6px;border-radius:50%;background:#fbbb35;border:0.5px solid #dfa023"></div>
<div class="a" style="left:62.4px;top:85.9px;width:9.6px;height:9.6px;border-radius:50%;background:#36c64b;border:0.5px solid #27aa3a"></div>
<span class="t" style='left:601.0px;top:85.00px;font-size:10.5px;color:#4a4a4a;letter-spacing:0.140px;'>*Хроно Арена Шорт трек анг.indd @ 150%</span>
<svg style="left:586px;top:84px" width="12" height="12" viewBox="0 0 12 12"><rect x="1" y="1" width="7" height="8" fill="#e9a9cf" stroke="#b06a98" stroke-width=".6"/><rect x="4" y="4" width="7" height="7.5" fill="#c9479a" stroke="#8d2e6b" stroke-width=".6"/></svg>
<div class="a" style="left:25px;top:98px;width:1345px;height:16px;background:linear-gradient(#bdbdbd,#b3b3b3);border-top:1px solid #a3a3a3;border-bottom:1px solid #9a9a9a"></div>
<div class="a" style="left:25px;top:99px;width:196px;height:15px;background:linear-gradient(#e4e4e4,#d6d6d6);border-right:1px solid #9a9a9a"></div>
<div class="a" style="left:222px;top:99px;width:189px;height:14px;background:linear-gradient(#cdcdcd,#c3c3c3);border-right:1px solid #9a9a9a"></div>
<span class="t" style='left:30.0px;top:102.00px;font-size:10px;color:#333;'>×</span>
<span class="t" style='left:42.5px;top:103.00px;font-size:8.6px;color:#1a1a1a;font-weight:bold;letter-spacing:-0.116px;'>*Хроно Арена Шорт трек анг.indd @ 150%</span>
<span class="t" style='left:227.0px;top:102.00px;font-size:10px;color:#333;'>×</span>
<span class="t" style='left:238.0px;top:103.00px;font-size:8.6px;color:#1a1a1a;font-weight:bold;letter-spacing:-0.112px;'>Хроно Арена Шорт трек ру.indd @ 100%</span>
<div class="a" style="left:25px;top:114px;width:1334px;height:13px;background:#fff;border-bottom:1px solid #555"></div>
<div class="a" style="left:25px;top:127px;width:13px;height:664px;background:#fff;border-right:1px solid #555"></div>
<div class="a" style="left:25px;top:114px;width:13px;height:13px;background:#fff;border-right:1px solid #777;border-bottom:1px solid #777"></div>
<svg style="left:0;top:0" width="1500" height="844"><path d="M39.0 125V127M43.8 125V127M48.5 125V127M53.2 123V127M58.0 125V127M62.8 125V127M67.5 125V127M72.2 125V127M77.0 115V127M81.8 125V127M86.5 125V127M91.2 125V127M96.0 125V127M100.8 123V127M105.5 125V127M110.2 125V127M115.0 125V127M119.8 125V127M124.5 115V127M129.2 125V127M134.0 125V127M138.8 125V127M143.5 125V127M148.2 123V127M153.0 125V127M157.8 125V127M162.5 125V127M167.2 125V127M172.0 115V127M176.8 125V127M181.5 125V127M186.2 125V127M191.0 125V127M195.8 123V127M200.5 125V127M205.2 125V127M210.0 125V127M214.8 125V127M219.5 115V127M224.2 125V127M229.0 125V127M233.8 125V127M238.5 125V127M243.2 123V127M248.0 125V127M252.8 125V127M257.5 125V127M262.2 125V127M267.0 115V127M271.8 125V127M276.5 125V127M281.2 125V127M286.0 125V127M290.8 123V127M295.5 125V127M300.2 125V127M305.0 125V127M309.8 125V127M314.5 115V127M319.2 125V127M324.0 125V127M328.8 125V127M333.5 125V127M338.2 123V127M343.0 125V127M347.8 125V127M352.5 125V127M357.2 125V127M362.0 115V127M366.8 125V127M371.5 125V127M376.2 125V127M381.0 125V127M385.8 123V127M390.5 125V127M395.2 125V127M400.0 125V127M404.8 125V127M409.5 115V127M414.2 125V127M419.0 125V127M423.8 125V127M428.5 125V127M433.2 123V127M438.0 125V127M442.8 125V127M447.5 125V127M452.2 125V127M457.0 115V127M461.8 125V127M466.5 125V127M471.2 125V127M476.0 125V127M480.8 123V127M485.5 125V127M490.2 125V127M495.0 125V127M499.8 125V127M504.5 115V127M509.2 125V127M514.0 125V127M518.8 125V127M523.5 125V127M528.2 123V127M533.0 125V127M537.8 125V127M542.5 125V127M547.2 125V127M552.0 115V127M556.8 125V127M561.5 125V127M566.2 125V127M571.0 125V127M575.8 123V127M580.5 125V127M585.2 125V127M590.0 125V127M594.8 125V127M599.5 115V127M604.2 125V127M609.0 125V127M613.8 125V127M618.5 125V127M623.2 123V127M628.0 125V127M632.8 125V127M637.5 125V127M642.2 125V127M647.0 115V127M651.8 125V127M656.5 125V127M661.2 125V127M666.0 125V127M670.8 123V127M675.5 125V127M680.2 125V127M685.0 125V127M689.8 125V127M694.5 115V127M699.2 125V127M704.0 125V127M708.8 125V127M713.5 125V127M718.2 123V127M723.0 125V127M727.8 125V127M732.5 125V127M737.2 125V127M742.0 115V127M746.8 125V127M751.5 125V127M756.2 125V127M761.0 125V127M765.8 123V127M770.5 125V127M775.2 125V127M780.0 125V127M784.8 125V127M789.5 115V127M794.2 125V127M799.0 125V127M803.8 125V127M808.5 125V127M813.2 123V127M818.0 125V127M822.8 125V127M827.5 125V127M832.2 125V127M837.0 115V127M841.8 125V127M846.5 125V127M851.2 125V127M856.0 125V127M860.8 123V127M865.5 125V127M870.2 125V127M875.0 125V127M879.8 125V127M884.5 115V127M889.2 125V127M894.0 125V127M898.8 125V127M903.5 125V127M908.2 123V127M913.0 125V127M917.8 125V127M922.5 125V127M927.2 125V127M932.0 115V127M936.8 125V127M941.5 125V127M946.2 125V127M951.0 125V127M955.8 123V127M960.5 125V127M965.2 125V127M970.0 125V127M974.8 125V127M979.5 115V127M984.2 125V127M989.0 125V127M993.8 125V127M998.5 125V127M1003.2 123V127M1008.0 125V127M1012.8 125V127M1017.5 125V127M1022.2 125V127M1027.0 115V127M1031.8 125V127M1036.5 125V127M1041.2 125V127M1046.0 125V127M1050.8 123V127M1055.5 125V127M1060.2 125V127M1065.0 125V127M1069.8 125V127M1074.5 115V127M1079.2 125V127M1084.0 125V127M1088.8 125V127M1093.5 125V127M1098.2 123V127M1103.0 125V127M1107.8 125V127M1112.5 125V127M1117.2 125V127M1122.0 115V127M1126.8 125V127M1131.5 125V127M1136.2 125V127M1141.0 125V127M1145.8 123V127M1150.5 125V127M1155.2 125V127M1160.0 125V127M1164.8 125V127M1169.5 115V127M1174.2 125V127M1179.0 125V127M1183.8 125V127M1188.5 125V127M1193.2 123V127M1198.0 125V127M1202.8 125V127M1207.5 125V127M1212.2 125V127M1217.0 115V127M1221.8 125V127M1226.5 125V127M1231.2 125V127M1236.0 125V127M1240.8 123V127M1245.5 125V127M1250.2 125V127M1255.0 125V127M1259.8 125V127M1264.5 115V127M1269.2 125V127M1274.0 125V127M1278.8 125V127M1283.5 125V127M1288.2 123V127M1293.0 125V127M1297.8 125V127M1302.5 125V127M1307.2 125V127M1312.0 115V127M1316.8 125V127M1321.5 125V127M1326.2 125V127M1331.0 125V127M1335.8 123V127M1340.5 125V127M1345.2 125V127M1350.0 125V127M1354.8 125V127" stroke="#222" stroke-width="1" fill="none" shape-rendering="crispEdges"/><path d="M36 127.5H38M36 132.2H38M26 137.0H38M36 141.7H38M36 146.5H38M36 151.2H38M36 156.0H38M34 160.7H38M36 165.5H38M36 170.2H38M36 175.0H38M36 179.7H38M26 184.5H38M36 189.2H38M36 194.0H38M36 198.7H38M36 203.5H38M34 208.2H38M36 213.0H38M36 217.7H38M36 222.5H38M36 227.2H38M26 232.0H38M36 236.7H38M36 241.5H38M36 246.2H38M36 251.0H38M34 255.7H38M36 260.5H38M36 265.2H38M36 270.0H38M36 274.7H38M26 279.5H38M36 284.2H38M36 289.0H38M36 293.7H38M36 298.5H38M34 303.2H38M36 308.0H38M36 312.7H38M36 317.5H38M36 322.2H38M26 327.0H38M36 331.7H38M36 336.5H38M36 341.2H38M36 346.0H38M34 350.7H38M36 355.5H38M36 360.2H38M36 365.0H38M36 369.7H38M26 374.5H38M36 379.2H38M36 384.0H38M36 388.7H38M36 393.5H38M34 398.2H38M36 403.0H38M36 407.7H38M36 412.5H38M36 417.2H38M26 422.0H38M36 426.7H38M36 431.5H38M36 436.2H38M36 441.0H38M34 445.7H38M36 450.5H38M36 455.2H38M36 460.0H38M36 464.7H38M26 469.5H38M36 474.2H38M36 479.0H38M36 483.7H38M36 488.5H38M34 493.2H38M36 498.0H38M36 502.7H38M36 507.5H38M36 512.2H38M26 517.0H38M36 521.7H38M36 526.5H38M36 531.2H38M36 536.0H38M34 540.7H38M36 545.5H38M36 550.2H38M36 555.0H38M36 559.7H38M26 564.5H38M36 569.2H38M36 574.0H38M36 578.7H38M36 583.5H38M34 588.2H38M36 593.0H38M36 597.7H38M36 602.5H38M36 607.2H38M26 612.0H38M36 616.7H38M36 621.5H38M36 626.2H38M36 631.0H38M34 635.7H38M36 640.5H38M36 645.2H38M36 650.0H38M36 654.7H38M26 659.5H38M36 664.2H38M36 669.0H38M36 673.7H38M36 678.5H38M34 683.2H38M36 688.0H38M36 692.7H38M36 697.5H38M36 702.2H38M26 707.0H38M36 711.7H38M36 716.5H38M36 721.2H38M36 726.0H38M34 730.7H38M36 735.5H38M36 740.2H38M36 745.0H38M36 749.7H38M26 754.5H38M36 759.2H38M36 764.0H38M36 768.7H38M36 773.5H38M34 778.2H38M36 783.0H38M36 787.7H38" stroke="#222" stroke-width="1" fill="none" shape-rendering="crispEdges"/></svg>
<span class="t" style='left:79.0px;top:116.00px;font-size:8px;color:#222;'>100</span>
<span class="t" style='left:126.5px;top:116.00px;font-size:8px;color:#222;'>110</span>
<span class="t" style='left:174.0px;top:116.00px;font-size:8px;color:#222;'>120</span>
<span class="t" style='left:221.5px;top:116.00px;font-size:8px;color:#222;'>130</span>
<span class="t" style='left:269.0px;top:116.00px;font-size:8px;color:#222;'>140</span>
<span class="t" style='left:316.5px;top:116.00px;font-size:8px;color:#222;'>150</span>
<span class="t" style='left:364.0px;top:116.00px;font-size:8px;color:#222;'>160</span>
<span class="t" style='left:411.5px;top:116.00px;font-size:8px;color:#222;'>170</span>
<span class="t" style='left:459.0px;top:116.00px;font-size:8px;color:#222;'>180</span>
<span class="t" style='left:506.5px;top:116.00px;font-size:8px;color:#222;'>190</span>
<span class="t" style='left:554.0px;top:116.00px;font-size:8px;color:#222;'>200</span>
<span class="t" style='left:601.5px;top:116.00px;font-size:8px;color:#222;'>210</span>
<span class="t" style='left:649.0px;top:116.00px;font-size:8px;color:#222;'>220</span>
<span class="t" style='left:696.5px;top:116.00px;font-size:8px;color:#222;'>230</span>
<span class="t" style='left:744.0px;top:116.00px;font-size:8px;color:#222;'>240</span>
<span class="t" style='left:791.5px;top:116.00px;font-size:8px;color:#222;'>250</span>
<span class="t" style='left:839.0px;top:116.00px;font-size:8px;color:#222;'>260</span>
<span class="t" style='left:886.5px;top:116.00px;font-size:8px;color:#222;'>270</span>
<span class="t" style='left:934.0px;top:116.00px;font-size:8px;color:#222;'>280</span>
<span class="t" style='left:981.5px;top:116.00px;font-size:8px;color:#222;'>290</span>
<span class="t" style='left:1029.0px;top:116.00px;font-size:8px;color:#222;'>300</span>
<span class="t" style='left:1076.5px;top:116.00px;font-size:8px;color:#222;'>310</span>
<span class="t" style='left:1124.0px;top:116.00px;font-size:8px;color:#222;'>320</span>
<span class="t" style='left:1171.5px;top:116.00px;font-size:8px;color:#222;'>330</span>
<span class="t" style='left:1219.0px;top:116.00px;font-size:8px;color:#222;'>340</span>
<span class="t" style='left:1266.5px;top:116.00px;font-size:8px;color:#222;'>350</span>
<span class="t" style='left:1314.0px;top:116.00px;font-size:8px;color:#222;'>360</span>
<span class="t" style='left:27.3px;top:137.00px;font-size:7.8px;color:#223;transform:scaleY(.82);'>4</span>
<span class="t" style='left:27.3px;top:142.00px;font-size:7.8px;color:#223;transform:scaleY(.82);'>0</span>
<span class="t" style='left:27.3px;top:184.00px;font-size:7.8px;color:#223;transform:scaleY(.82);'>5</span>
<span class="t" style='left:27.3px;top:190.00px;font-size:7.8px;color:#223;transform:scaleY(.82);'>0</span>
<span class="t" style='left:27.3px;top:232.00px;font-size:7.8px;color:#223;transform:scaleY(.82);'>6</span>
<span class="t" style='left:27.3px;top:237.00px;font-size:7.8px;color:#223;transform:scaleY(.82);'>0</span>
<span class="t" style='left:27.3px;top:279.00px;font-size:7.8px;color:#223;transform:scaleY(.82);'>7</span>
<span class="t" style='left:27.3px;top:285.00px;font-size:7.8px;color:#223;transform:scaleY(.82);'>0</span>
<span class="t" style='left:27.3px;top:327.00px;font-size:7.8px;color:#223;transform:scaleY(.82);'>8</span>
<span class="t" style='left:27.3px;top:332.00px;font-size:7.8px;color:#223;transform:scaleY(.82);'>0</span>
<span class="t" style='left:27.3px;top:374.00px;font-size:7.8px;color:#223;transform:scaleY(.82);'>9</span>
<span class="t" style='left:27.3px;top:380.00px;font-size:7.8px;color:#223;transform:scaleY(.82);'>0</span>
<span class="t" style='left:27.3px;top:422.00px;font-size:7.8px;color:#223;transform:scaleY(.82);'>1</span>
<span class="t" style='left:27.3px;top:427.00px;font-size:7.8px;color:#223;transform:scaleY(.82);'>0</span>
<span class="t" style='left:27.3px;top:433.00px;font-size:7.8px;color:#223;transform:scaleY(.82);'>0</span>
<span class="t" style='left:27.3px;top:469.00px;font-size:7.8px;color:#223;transform:scaleY(.82);'>1</span>
<span class="t" style='left:27.3px;top:475.00px;font-size:7.8px;color:#223;transform:scaleY(.82);'>1</span>
<span class="t" style='left:27.3px;top:480.00px;font-size:7.8px;color:#223;transform:scaleY(.82);'>0</span>
<span class="t" style='left:27.3px;top:517.00px;font-size:7.8px;color:#223;transform:scaleY(.82);'>1</span>
<span class="t" style='left:27.3px;top:522.00px;font-size:7.8px;color:#223;transform:scaleY(.82);'>2</span>
<span class="t" style='left:27.3px;top:528.00px;font-size:7.8px;color:#223;transform:scaleY(.82);'>0</span>
<span class="t" style='left:27.3px;top:564.00px;font-size:7.8px;color:#223;transform:scaleY(.82);'>1</span>
<span class="t" style='left:27.3px;top:570.00px;font-size:7.8px;color:#223;transform:scaleY(.82);'>3</span>
<span class="t" style='left:27.3px;top:575.00px;font-size:7.8px;color:#223;transform:scaleY(.82);'>0</span>
<span class="t" style='left:27.3px;top:612.00px;font-size:7.8px;color:#223;transform:scaleY(.82);'>1</span>
<span class="t" style='left:27.3px;top:617.00px;font-size:7.8px;color:#223;transform:scaleY(.82);'>4</span>
<span class="t" style='left:27.3px;top:623.00px;font-size:7.8px;color:#223;transform:scaleY(.82);'>0</span>
<span class="t" style='left:27.3px;top:659.00px;font-size:7.8px;color:#223;transform:scaleY(.82);'>1</span>
<span class="t" style='left:27.3px;top:665.00px;font-size:7.8px;color:#223;transform:scaleY(.82);'>5</span>
<span class="t" style='left:27.3px;top:670.00px;font-size:7.8px;color:#223;transform:scaleY(.82);'>0</span>
<span class="t" style='left:27.3px;top:707.00px;font-size:7.8px;color:#223;transform:scaleY(.82);'>1</span>
<span class="t" style='left:27.3px;top:712.00px;font-size:7.8px;color:#223;transform:scaleY(.82);'>6</span>
<span class="t" style='left:27.3px;top:718.00px;font-size:7.8px;color:#223;transform:scaleY(.82);'>0</span>
<span class="t" style='left:27.3px;top:754.00px;font-size:7.8px;color:#223;transform:scaleY(.82);'>1</span>
<span class="t" style='left:27.3px;top:760.00px;font-size:7.8px;color:#223;transform:scaleY(.82);'>7</span>
<span class="t" style='left:27.3px;top:765.00px;font-size:7.8px;color:#223;transform:scaleY(.82);'>0</span>
<div class="a" style="left:25px;top:456px;width:12px;height:0;border-top:1px dotted #777"></div>
<div class="a" style="left:25px;top:120px;width:12px;height:0;border-top:1px dotted #777"></div><div class="a" style="left:29px;top:115px;width:0;height:12px;border-left:1px dotted #777"></div>
<div class="a" id="cv" style="left:38px;top:127px;width:1321px;height:664px;overflow:hidden;background:#fff">
<div class="a" style="left:-38px;top:-127px;width:1500px;height:844px">
<div class="a" style="left:38px;top:127px;width:170.5px;height:7px;background:#00a5dc;"></div>
<div class="a" style="left:38px;top:138.3px;width:170.5px;height:44.7px;background:#bfd9ea;"></div>
<div class="a" style="left:38px;top:187.5px;width:170.5px;height:43.7px;background:#bfd9ea;"></div>
<div class="a" style="left:38px;top:235.8px;width:170.5px;height:79.8px;background:#bfd9ea;"></div>
<div class="a" style="left:38px;top:320px;width:170.5px;height:80.8px;background:#bfd9ea;"></div>
<div class="a" style="left:38px;top:405.4px;width:170.5px;height:80.4px;background:#bfd9ea;"></div>
<div class="a" style="left:38px;top:135.5px;width:172px;height:1px;background:#b4bfe6;opacity:.7"></div>
<div class="a" style="left:38px;top:184.7px;width:172px;height:1px;background:#b4bfe6;opacity:.7"></div>
<div class="a" style="left:38px;top:233px;width:172px;height:1px;background:#b4bfe6;opacity:.7"></div>
<div class="a" style="left:38px;top:317.3px;width:172px;height:1px;background:#b4bfe6;opacity:.7"></div>
<div class="a" style="left:38px;top:402.5px;width:172px;height:1px;background:#b4bfe6;opacity:.7"></div>
<div class="a" style="left:38px;top:487.5px;width:172px;height:1px;background:#b4bfe6;opacity:.7"></div>
<div class="a" style="left:208.8px;top:127px;width:1px;height:361px;background:#b4bfe6;opacity:.6"></div>
<div class="a" style="left:210px;top:127px;width:1.3px;height:664px;background:#a45ce8;"></div>
<div class="a" style="left:400.5px;top:127px;width:1.3px;height:664px;background:#a45ce8;"></div>
<div class="a" style="left:961px;top:127px;width:1.3px;height:664px;background:#a45ce8;"></div>
<div class="a" style="left:242px;top:127px;width:0;height:664px;border-left:1px dotted #9db9e6"></div>
<div class="a" style="left:369px;top:127px;width:0;height:664px;border-left:1px dotted #9db9e6"></div>
<div class="a" style="left:38px;top:557px;width:980px;height:0;border-top:1px dotted #9db9e6"></div>
<div class="a" style="left:38px;top:746px;width:980px;height:0;border-top:1px dotted #9db9e6"></div>
<div class="a" style="left:1008.3px;top:127px;width:2.2px;height:664px;background:#000;"></div>
<div class="a" style="left:1017.8px;top:127px;width:1px;height:664px;background:#f26a78;"></div>
<span class="t" style='left:211.0px;top:482.00px;font-size:10px;color:#5b86c9;font-weight:bold;'>¶</span>
<svg style="left:0;top:0" width="1500" height="844"><defs><linearGradient id="gb" x1="0" y1="0" x2="0" y2="1"><stop offset="0" stop-color="#a2a2a2"/><stop offset=".4" stop-color="#bdbdbd"/><stop offset="1" stop-color="#f6f6f6"/></linearGradient><g id="spi"><rect x="-26" y="-8.6" width="51" height="3.800" fill="url(#gb)"/><rect x="-26" y="1.4" width="51" height="3.800" fill="url(#gb)"/><path d="M-19 -9.2H-27.500C-31.500 -9.200 -34.300 -5 -34.300 0C-34.300 5 -31.500 9.300 -27.500 9.300H-19.500" fill="none" stroke="#151515" stroke-width="1.250"/><path d="M19 -9.2H27.500C31.500 -9.200 34.300 -5 34.300 0C34.300 5 31.500 9.300 27.500 9.300H19.500" fill="none" stroke="#151515" stroke-width="1.250"/><path d="M-13.800 -2V1.600M14.500 -2V1.600" stroke="#222" stroke-width="1"/></g></defs><use href="#spi" x="305.8" y="145.8"/><rect x="290" y="143.2" width="4" height="5" fill="#f2f2f2"/><path d="M290.300 143.6L293 145.6L290.300 147.4" fill="none" stroke="#222" stroke-width=".9"/><use href="#spi" x="305.8" y="186.4"/><use href="#spi" x="305.8" y="227.0"/><use href="#spi" x="305.8" y="267.7"/><use href="#spi" x="305.8" y="308.3"/><rect x="290" y="305.7" width="4" height="5" fill="#f2f2f2"/><path d="M290.300 306.1L293 308.1L290.300 309.9" fill="none" stroke="#222" stroke-width=".9"/><use href="#spi" x="305.8" y="348.9"/><use href="#spi" x="305.8" y="389.5"/><use href="#spi" x="305.8" y="430.1"/><rect x="290" y="427.5" width="4" height="5" fill="#f2f2f2"/><path d="M290.300 427.9L293 429.9L290.300 431.7" fill="none" stroke="#222" stroke-width=".9"/><use href="#spi" x="305.8" y="470.8"/><rect x="290" y="468.2" width="4" height="5" fill="#f2f2f2"/><path d="M290.300 468.6L293 470.6L290.300 472.4" fill="none" stroke="#222" stroke-width=".9"/><use href="#spi" x="305.8" y="511.4"/><use href="#spi" x="305.8" y="552.0"/><rect x="290" y="549.4" width="4" height="5" fill="#f2f2f2"/><path d="M290.300 549.8L293 551.8L290.300 553.6" fill="none" stroke="#222" stroke-width=".9"/><use href="#spi" x="305.8" y="592.6"/><rect x="290" y="590.0" width="4" height="5" fill="#f2f2f2"/><path d="M290.300 590.4L293 592.4L290.300 594.2" fill="none" stroke="#222" stroke-width=".9"/><use href="#spi" x="305.8" y="633.2"/><use href="#spi" x="305.8" y="673.9"/><use href="#spi" x="305.8" y="714.5"/><rect x="290" y="711.9" width="4" height="5" fill="#f2f2f2"/><path d="M290.300 712.3L293 714.3L290.300 716.1" fill="none" stroke="#222" stroke-width=".9"/><use href="#spi" x="305.8" y="755.1"/><use href="#spi" x="305.8" y="795.7"/></svg>
<div class="a" style="left:305.2px;top:127px;width:1.3px;height:664px;background:#444;"></div>
<div class="a" style="left:1001px;top:743px;width:10px;height:6px;border-radius:3px;background:#9aa0a8;border:1px solid #6d737b"></div>
<span class="t h" style='left:38.5px;top:564.00px;font-size:17.6px;color:#1f86c5;transform:scaleX(0.9659);transform-origin:0 0;--d:#7fb2de;'>etition<i> </i>will<i> </i>be<i> </i>held<i> </i>as<i> </i>a</span>
<span class="t" style='left:29.5px;top:585.00px;font-size:17.6px;color:#1f86c5;'>3.</span>
<span class="t" style='left:42.5px;top:590.00px;font-size:12.5px;color:#5f8fd2;font-weight:bold;'>¶</span>
<span class="t h" style='left:46.0px;top:624.00px;font-size:17.6px;color:#1f86c5;transform:scaleX(0.8987);transform-origin:0 0;--d:#7fb2de;'>the<i> </i>Russian<i> </i>Federation</span>
<span class="t" style='left:33.5px;top:624.00px;font-size:17.6px;color:#1f86c5;'>f</span>
<span class="t" style='left:40.0px;top:626.00px;font-size:12px;color:#7fb2de;'>·</span>
<div class="a" style="left:402.5px;top:134px;width:560px;height:1.2px;background:#b4bfe6;"></div>
<div class="a" style="left:402.5px;top:181.7px;width:560px;height:1.2px;background:#b4bfe6;"></div>
<div class="a" style="left:402.5px;top:271.7px;width:560px;height:1.2px;background:#b4bfe6;"></div>
<div class="a" style="left:402.5px;top:651px;width:560px;height:1.2px;background:#b4bfe6;"></div>
<div class="a" style="left:402.5px;top:134px;width:1.2px;height:518px;background:#b4bfe6;"></div>
<div class="a" style="left:440px;top:134px;width:1.2px;height:518px;background:#b4bfe6;"></div>
<div class="a" style="left:535.3px;top:134px;width:1.2px;height:518px;background:#b4bfe6;"></div>
<div class="a" style="left:961.4px;top:134px;width:1.2px;height:518px;background:#b4bfe6;"></div>
<div class="a" style="left:405px;top:137px;width:33.6px;height:43px;background:#d3006b;"></div><div class="a" style="left:442.6px;top:137px;width:91.1px;height:43px;background:#d3006b;"></div><div class="a" style="left:538px;top:137px;width:422.6px;height:43px;background:#d3006b;"></div>
<div class="a" style="left:405px;top:184.6px;width:33.6px;height:85px;background:#00a5dc;"></div><div class="a" style="left:442.6px;top:184.6px;width:91.1px;height:85px;background:#bfd9ea;"></div><div class="a" style="left:538px;top:184.6px;width:422.6px;height:85px;background:#bfd9ea;"></div>
<div class="a" style="left:405px;top:275px;width:33.6px;height:139.4px;background:#00a5dc;"></div><div class="a" style="left:442.6px;top:275px;width:91.1px;height:139.4px;background:#bfd9ea;"></div><div class="a" style="left:538px;top:275px;width:422.6px;height:139.4px;background:#bfd9ea;"></div>
<div class="a" style="left:405px;top:582px;width:33.6px;height:67.7px;background:#00a5dc;"></div><div class="a" style="left:442.6px;top:582px;width:91.1px;height:67.7px;background:#bfd9ea;"></div><div class="a" style="left:538px;top:582px;width:422.6px;height:67.7px;background:#bfd9ea;"></div>
<div class="a" style="left:402.3px;top:416.6px;width:560px;height:163.4px;background:#0a0604;"></div>
<div class="a" style="left:405px;top:419.6px;width:33.6px;height:157.6px;background:#ff5a22;"></div>
<div class="a" style="left:442.6px;top:419.6px;width:91.1px;height:157.6px;background:#40261a;"></div>
<div class="a" style="left:538px;top:419.6px;width:422.6px;height:157.6px;background:#40261a;"></div>
<div class="a" style="left:961.2px;top:417px;width:1px;height:162.6px;background:#4f9a10;"></div>
<div class="a" style="left:524.5px;top:568.8px;width:9px;height:7px;border-radius:50%;background:#2de0e6;border:1.2px solid #04282a"></div>
<span class="t" style='left:421.0px;top:155.00px;font-size:11px;color:#6a8fd6;font-style:italic;'>#</span>
<span class="t" style='left:446.0px;top:152.00px;font-size:15px;color:#fff;font-weight:bold;letter-spacing:0.007px;'>CATEGORY</span>
<span class="t" style='left:529.6px;top:155.00px;font-size:11px;color:#6a8fd6;font-style:italic;'>#</span>
<span class="t" style='left:695.7px;top:152.00px;font-size:15px;color:#fff;font-weight:bold;letter-spacing:0.444px;'>DESCRIPTION</span>
<span class="t" style='left:803.5px;top:155.00px;font-size:11px;color:#6a8fd6;font-style:italic;'>#</span>
<span class="t" style='left:418.6px;top:205.00px;font-size:11px;color:#fff;font-weight:bold;'>1</span>
<span class="t" style='left:427.0px;top:207.00px;font-size:8.5px;color:#5d8fd0;font-style:italic;'>#</span>
<span class="t" style='left:418.6px;top:296.00px;font-size:11px;color:#fff;font-weight:bold;'>2</span>
<span class="t" style='left:427.0px;top:298.00px;font-size:8.5px;color:#5d8fd0;font-style:italic;'>#</span>
<span class="t" style='left:418.6px;top:440.00px;font-size:11px;color:#111;font-weight:bold;'>3</span>
<span class="t" style='left:427.0px;top:442.00px;font-size:8.5px;color:#c8682a;font-style:italic;'>#</span>
<span class="t" style='left:418.6px;top:603.00px;font-size:11px;color:#fff;font-weight:bold;'>4</span>
<span class="t" style='left:427.0px;top:605.00px;font-size:8.5px;color:#5d8fd0;font-style:italic;'>#</span>
<span class="t h" style='left:448.6px;top:205.00px;font-size:14.5px;color:#0d74b9;letter-spacing:0.242px;-webkit-text-stroke:0.55px currentColor;--d:#6fa8d8;'>Field<i> </i>of</span>
<span class="t h" style='left:448.6px;top:222.00px;font-size:14.5px;color:#0d74b9;transform:scaleX(0.9391);transform-origin:0 0;-webkit-text-stroke:0.55px currentColor;--d:#6fa8d8;'>Play</span>
<span class="t h" style='left:448.6px;top:296.00px;font-size:14.5px;color:#0d74b9;transform:scaleX(0.9729);transform-origin:0 0;-webkit-text-stroke:0.55px currentColor;--d:#6fa8d8;'>Room<i> </i>Size</span>
<span class="t h" style='left:448.6px;top:314.00px;font-size:14.5px;color:#0d74b9;letter-spacing:0.008px;-webkit-text-stroke:0.55px currentColor;--d:#6fa8d8;'>(in<i> </i>sq.<i> </i>m)</span>
<span class="t h" style='left:448.6px;top:440.00px;font-size:14.5px;color:#f28b46;letter-spacing:-0.062px;-webkit-text-stroke:0.55px currentColor;--d:#9a5a30;'>Power</span>
<span class="t h" style='left:448.6px;top:602.00px;font-size:14.5px;color:#0d74b9;letter-spacing:0.285px;-webkit-text-stroke:0.55px currentColor;--d:#6fa8d8;'>Furniture</span>
<span class="t" style='left:476.5px;top:226.00px;font-size:10px;color:#6f8fd0;font-style:italic;'>#</span>
<span class="t" style='left:521.0px;top:300.00px;font-size:10px;color:#6f8fd0;'>¬</span>
<span class="t" style='left:514.0px;top:318.00px;font-size:10px;color:#6f8fd0;font-style:italic;'>#</span>
<span class="t" style='left:512.0px;top:606.00px;font-size:10px;color:#6f8fd0;font-style:italic;'>#</span>
<svg style="left:544.6px;top:205.8px" width="6" height="7" viewBox="0 0 6 7"><path d="M0 0L6 3.5L0 7Z" fill="#d3006b"/></svg>
<span class="t h" style='left:558.0px;top:202.00px;font-size:14.5px;color:#0d74b9;letter-spacing:0.329px;-webkit-text-stroke:0.55px currentColor;--d:#6fa8d8;'>1<i> </i>Field<i> </i>of<i> </i>play<i> </i>required</span>
<span class="t" style='left:713.7px;top:205.00px;font-size:11.5px;color:#5f8fd2;font-weight:bold;'>¶</span>
<svg style="left:544.6px;top:224.0px" width="6" height="7" viewBox="0 0 6 7"><path d="M0 0L6 3.5L0 7Z" fill="#d3006b"/></svg>
<span class="t h" style='left:558.0px;top:220.00px;font-size:14.5px;color:#0d74b9;letter-spacing:0.245px;-webkit-text-stroke:0.55px currentColor;--d:#6fa8d8;'>2<i> </i>Finish<i> </i>lines<i> </i>required</span>
<span class="t" style='left:705.8px;top:224.00px;font-size:11.5px;color:#5f8fd2;font-weight:bold;'>¶</span>
<svg style="left:544.6px;top:242.2px" width="6" height="7" viewBox="0 0 6 7"><path d="M0 0L6 3.5L0 7Z" fill="#d3006b"/></svg>
<span class="t h" style='left:558.0px;top:238.00px;font-size:14.5px;color:#0d74b9;letter-spacing:0.418px;-webkit-text-stroke:0.55px currentColor;--d:#6fa8d8;'>2<i> </i>Start<i> </i>lines<i> </i>required</span>
<span class="t" style='left:701.5px;top:242.00px;font-size:10px;color:#6f8fd0;font-style:italic;'>#</span>
<span class="t h" style='left:543.4px;top:294.00px;font-size:14.5px;color:#0d74b9;transform:scaleX(0.9790);transform-origin:0 0;-webkit-text-stroke:0.55px currentColor;--d:#6fa8d8;'>OVR,<i> </i>Room<i> </i>128.2</span>
<span class="t" style='left:659.7px;top:297.00px;font-size:11.5px;color:#5f8fd2;font-weight:bold;'>¶</span>
<svg style="left:544.6px;top:315.4px" width="6" height="7" viewBox="0 0 6 7"><path d="M0 0L6 3.5L0 7Z" fill="#d3006b"/></svg>
<span class="t h" style='left:558.0px;top:312.00px;font-size:14.5px;color:#0d74b9;letter-spacing:0.229px;-webkit-text-stroke:0.55px currentColor;--d:#6fa8d8;'>30<i> </i>sq.<i> </i>m.<i> </i>Technical<i> </i>Table<i> </i>/<i> </i>FOP<i> </i>Position</span>
<span class="t" style='left:827.0px;top:315.00px;font-size:11.5px;color:#5f8fd2;font-weight:bold;'>¶</span>
<svg style="left:544.6px;top:333.4px" width="6" height="7" viewBox="0 0 6 7"><path d="M0 0L6 3.5L0 7Z" fill="#d3006b"/></svg>
<span class="t h" style='left:558.0px;top:330.00px;font-size:14.5px;color:#0d74b9;letter-spacing:0.398px;-webkit-text-stroke:0.55px currentColor;--d:#6fa8d8;'>Must<i> </i>be<i> </i>located<i> </i>adjacent<i> </i>to<i> </i>the<i> </i>finish<i> </i>line<i> </i>with<i> </i>an</span>
<span class="t h" style='left:558.0px;top:348.00px;font-size:14.5px;color:#0d74b9;letter-spacing:0.300px;-webkit-text-stroke:0.55px currentColor;--d:#6fa8d8;'>unobstructed<i> </i>of<i> </i>the<i> </i>finish<i> </i>line<i> </i>and<i> </i>a<i> </i>view<i> </i>of<i> </i>the<i> </i>PSCB</span>
<span class="t" style='left:920.3px;top:351.00px;font-size:11.5px;color:#5f8fd2;font-weight:bold;'>¶</span>
<svg style="left:544.6px;top:369.4px" width="6" height="7" viewBox="0 0 6 7"><path d="M0 0L6 3.5L0 7Z" fill="#d3006b"/></svg>
<span class="t h" style='left:558.0px;top:366.00px;font-size:14.5px;color:#0d74b9;letter-spacing:0.302px;-webkit-text-stroke:0.55px currentColor;--d:#6fa8d8;'>Storage<i> </i>25<i> </i>sq.<i> </i>m<i> </i>with<i> </i>double<i> </i>doors<i> </i>at<i> </i>the<i> </i>same<i> </i>level<i> </i>as</span>
<span class="t h" style='left:558.0px;top:384.00px;font-size:14.5px;color:#0d74b9;transform:scaleX(0.8990);transform-origin:0 0;-webkit-text-stroke:0.55px currentColor;--d:#6fa8d8;'>FOP</span>
<span class="t" style='left:585.3px;top:388.00px;font-size:10px;color:#6f8fd0;font-style:italic;'>#</span>
<svg style="left:544.6px;top:441.8px" width="6" height="7" viewBox="0 0 6 7"><path d="M0 0L6 3.5L0 7Z" fill="#2ee69c"/></svg>
<span class="t h" style='left:558.0px;top:438.00px;font-size:14.5px;color:#f28b46;letter-spacing:0.242px;-webkit-text-stroke:0.55px currentColor;--d:#9a5a30;'>Technical<i> </i>Table:<i> </i>16<i> </i>power<i> </i>sockets<i> </i>for<i> </i>230<i> </i>V,<i> </i>4<i> </i>KVA</span>
<span class="t" style='left:899.8px;top:441.00px;font-size:11.5px;color:#a8703c;font-weight:bold;'>¶</span>
<svg style="left:544.6px;top:459.8px" width="6" height="7" viewBox="0 0 6 7"><path d="M0 0L6 3.5L0 7Z" fill="#2ee69c"/></svg>
<span class="t h" style='left:558.0px;top:456.00px;font-size:14.5px;color:#f28b46;letter-spacing:0.243px;-webkit-text-stroke:0.55px currentColor;--d:#9a5a30;'>Storage:<i> </i>4<i> </i>power<i> </i>sockets<i> </i>for<i> </i>230<i> </i>V,<i> </i>4<i> </i>KVA</span>
<span class="t" style='left:841.5px;top:459.00px;font-size:11.5px;color:#a8703c;font-weight:bold;'>¶</span>
<svg style="left:544.6px;top:477.8px" width="6" height="7" viewBox="0 0 6 7"><path d="M0 0L6 3.5L0 7Z" fill="#2ee69c"/></svg>
<span class="t h" style='left:558.0px;top:474.00px;font-size:14.5px;color:#f28b46;letter-spacing:0.223px;-webkit-text-stroke:0.55px currentColor;--d:#9a5a30;'>Each<i> </i>Start<i> </i>(2):<i> </i>2<i> </i>power<i> </i>sockets<i> </i>for<i> </i>230<i> </i>V,<i> </i>1<i> </i>KVA</span>
<span class="t" style='left:880.9px;top:477.00px;font-size:11.5px;color:#a8703c;font-weight:bold;'>¶</span>
<svg style="left:544.6px;top:495.8px" width="6" height="7" viewBox="0 0 6 7"><path d="M0 0L6 3.5L0 7Z" fill="#2ee69c"/></svg>
<span class="t h" style='left:558.0px;top:492.00px;font-size:14.5px;color:#f28b46;letter-spacing:0.227px;-webkit-text-stroke:0.55px currentColor;--d:#9a5a30;'>Main<i> </i>Finish:<i> </i>2<i> </i>power<i> </i>sockets<i> </i>for<i> </i>230<i> </i>V,<i> </i>1<i> </i>KVA</span>
<span class="t" style='left:865.1px;top:495.00px;font-size:11.5px;color:#a8703c;font-weight:bold;'>¶</span>
<svg style="left:544.6px;top:513.8px" width="6" height="7" viewBox="0 0 6 7"><path d="M0 0L6 3.5L0 7Z" fill="#2ee69c"/></svg>
<span class="t h" style='left:558.0px;top:510.00px;font-size:14.5px;color:#f28b46;letter-spacing:0.226px;-webkit-text-stroke:0.55px currentColor;--d:#9a5a30;'>Team<i> </i>Finish:<i> </i>1<i> </i>power<i> </i>sockets<i> </i>for<i> </i>230<i> </i>V,<i> </i>1<i> </i>KVA</span>
<span class="t" style='left:869.1px;top:513.00px;font-size:11.5px;color:#a8703c;font-weight:bold;'>¶</span>
<svg style="left:544.6px;top:532.2px" width="6" height="7" viewBox="0 0 6 7"><path d="M0 0L6 3.5L0 7Z" fill="#2ee69c"/></svg>
<span class="t h" style='left:558.0px;top:528.00px;font-size:14.5px;color:#f28b46;letter-spacing:0.165px;-webkit-text-stroke:0.55px currentColor;--d:#9a5a30;'>Each<i> </i>VRS<i> </i>Camera<i> </i>location<i> </i>(3):<i> </i>1<i> </i>power<i> </i>sockets<i> </i>for<i> </i>230<i> </i>V,</span>
<span class="t h" style='left:558.0px;top:546.00px;font-size:14.5px;color:#f28b46;transform:scaleX(0.9642);transform-origin:0 0;-webkit-text-stroke:0.55px currentColor;--d:#9a5a30;'>1<i> </i>KVA</span>
<span class="t" style='left:597.1px;top:550.00px;font-size:10px;color:#a8703c;font-style:italic;'>#</span>
<svg style="left:544.6px;top:604.2px" width="6" height="7" viewBox="0 0 6 7"><path d="M0 0L6 3.5L0 7Z" fill="#d3006b"/></svg>
<span class="t h" style='left:558.0px;top:600.00px;font-size:14.5px;color:#0d74b9;letter-spacing:0.269px;-webkit-text-stroke:0.55px currentColor;--d:#6fa8d8;'>Technical<i> </i>Table:<i> </i>5<i> </i>tables<i> </i>at<i> </i>2<i> </i>m<i> </i>x<i> </i>0.8<i> </i>m<i> </i>x<i> </i>0.8<i> </i>m,<i> </i>6<i> </i>chairs</span>
<span class="t" style='left:937.9px;top:604.00px;font-size:11.5px;color:#5f8fd2;font-weight:bold;'>¶</span>
<svg style="left:544.6px;top:622.2px" width="6" height="7" viewBox="0 0 6 7"><path d="M0 0L6 3.5L0 7Z" fill="#d3006b"/></svg>
<span class="t h" style='left:558.0px;top:618.00px;font-size:14.5px;color:#0d74b9;letter-spacing:0.277px;-webkit-text-stroke:0.55px currentColor;--d:#6fa8d8;'>Storage:<i> </i>1<i> </i>table<i> </i>at<i> </i>2<i> </i>m<i> </i>x<i> </i>0.8<i> </i>m<i> </i>x<i> </i>0.8<i> </i>m,<i> </i>1<i> </i>chair</span>
<span class="t" style='left:873.2px;top:622.00px;font-size:10px;color:#6f8fd0;font-style:italic;'>#</span>
<div class="a" style="left:1065.7px;top:226.7px;width:1.2px;height:570px;background:#9fb4e4;"></div>
<div class="a" style="left:1065.7px;top:226.7px;width:300px;height:1px;background:#9fb4e4;"></div>
<span class="t h" style='left:1066.8px;top:225.00px;font-size:22.8px;color:#d3006b;font-weight:bold;transform:scaleX(0.9781);transform-origin:0 0;--d:#e58ab6;'>МЕРОПРИЯТИЯ<i> </i>ХРОНОМЕТРАЖА</span>
<span class="t h" style='left:1066.8px;top:271.00px;font-size:14.4px;color:#0d74b9;font-weight:bold;transform:scaleX(1.0974);transform-origin:0 0;--d:#6fa8d8;'>Соревнования<i> </i>Универсиады</span>
<span class="t" style='left:1293.0px;top:274.00px;font-size:12px;color:#5f8fd2;font-weight:bold;'>¶</span>
<div class="a" style="left:1068px;top:291.7px;width:300px;height:1.2px;background:#b4bfe6;"></div>
<div class="a" style="left:1068px;top:323px;width:300px;height:1.2px;background:#b4bfe6;"></div>
<div class="a" style="left:1068px;top:371px;width:300px;height:1.2px;background:#b4bfe6;"></div>
<div class="a" style="left:1068px;top:419.5px;width:300px;height:1.2px;background:#b4bfe6;"></div>
<div class="a" style="left:1068px;top:504.2px;width:300px;height:1.2px;background:#b4bfe6;"></div>
<div class="a" style="left:1068px;top:588.9px;width:300px;height:1.2px;background:#b4bfe6;"></div>
<div class="a" style="left:1068px;top:672.9px;width:300px;height:1.2px;background:#b4bfe6;"></div>
<div class="a" style="left:1068.1px;top:292px;width:1.2px;height:382px;background:#b4bfe6;"></div>
<div class="a" style="left:1215.5px;top:292px;width:1.2px;height:382px;background:#b4bfe6;"></div>
<div class="a" style="left:1070.7px;top:295.3px;width:143.1px;height:25.7px;background:#d3006b;"></div>
<div class="a" style="left:1218.5px;top:295.3px;width:146.5px;height:25.7px;background:#00a5dc;"></div>
<div class="a" style="left:1070.7px;top:326.3px;width:143.1px;height:42.7px;background:#d3006b;"></div>
<div class="a" style="left:1218.5px;top:326.3px;width:146.5px;height:42.7px;background:#bfd9ea;"></div>
<div class="a" style="left:1070.7px;top:374.3px;width:143.1px;height:43.4px;background:#d3006b;"></div>
<div class="a" style="left:1218.5px;top:374.3px;width:146.5px;height:43.4px;background:#bfd9ea;"></div>
<div class="a" style="left:1070.7px;top:422.5px;width:143.1px;height:79.8px;background:#d3006b;"></div>
<div class="a" style="left:1218.5px;top:422.5px;width:146.5px;height:79.8px;background:#bfd9ea;"></div>
<div class="a" style="left:1070.7px;top:507.2px;width:143.1px;height:80.2px;background:#d3006b;"></div>
<div class="a" style="left:1218.5px;top:507.2px;width:146.5px;height:80.2px;background:#bfd9ea;"></div>
<div class="a" style="left:1070.7px;top:591.6px;width:143.1px;height:79.8px;background:#d3006b;"></div>
<div class="a" style="left:1218.5px;top:591.6px;width:146.5px;height:79.8px;background:#bfd9ea;"></div>
<span class="t" style='left:1078.0px;top:307.00px;font-size:9px;color:#7d8fe0;font-style:italic;'>#</span>
<span class="t h" style='left:1078.2px;top:332.00px;font-size:14.5px;color:#fff;letter-spacing:0.428px;-webkit-text-stroke:0.6px currentColor;--d:#e58ab6;'>СУББОТА</span>
<span class="t" style='left:1148.9px;top:336.00px;font-size:11.5px;color:#9b8fe6;font-weight:bold;'>¶</span>
<span class="t h" style='left:1078.2px;top:350.00px;font-size:14.5px;color:#fff;letter-spacing:0.964px;-webkit-text-stroke:0.6px currentColor;--d:#e58ab6;'>02<i> </i>марта</span>
<span class="t" style='left:1146.9px;top:354.00px;font-size:10px;color:#9b8fe6;font-style:italic;'>#</span>
<span class="t h" style='left:1078.2px;top:380.00px;font-size:14.5px;color:#fff;letter-spacing:0.279px;-webkit-text-stroke:0.6px currentColor;--d:#e58ab6;'>ВОСКРЕСЕНЬЕ</span>
<span class="t" style='left:1190.1px;top:384.00px;font-size:11.5px;color:#9b8fe6;font-weight:bold;'>¶</span>
<span class="t h" style='left:1078.2px;top:398.00px;font-size:14.5px;color:#fff;letter-spacing:0.977px;-webkit-text-stroke:0.6px currentColor;--d:#e58ab6;'>03<i> </i>марта</span>
<span class="t" style='left:1147.0px;top:402.00px;font-size:10px;color:#9b8fe6;font-style:italic;'>#</span>
<span class="t h" style='left:1078.2px;top:447.00px;font-size:14.5px;color:#fff;letter-spacing:0.262px;-webkit-text-stroke:0.6px currentColor;--d:#e58ab6;'>ПОНЕДЕЛЬНИК</span>
<span class="t" style='left:1191.1px;top:451.00px;font-size:11.5px;color:#9b8fe6;font-weight:bold;'>¶</span>
<span class="t h" style='left:1078.2px;top:464.00px;font-size:14.5px;color:#fff;letter-spacing:0.339px;-webkit-text-stroke:0.6px currentColor;--d:#e58ab6;'>04<i> </i>МАРТА</span>
<span class="t" style='left:1150.4px;top:468.00px;font-size:10px;color:#9b8fe6;font-style:italic;'>#</span>
<span class="t h" style='left:1078.2px;top:533.00px;font-size:14.5px;color:#fff;letter-spacing:0.900px;-webkit-text-stroke:0.6px currentColor;--d:#e58ab6;'>ВТОРНИК</span>
<span class="t" style='left:1152.0px;top:536.00px;font-size:11.5px;color:#9b8fe6;font-weight:bold;'>¶</span>
<span class="t h" style='left:1078.2px;top:549.00px;font-size:14.5px;color:#fff;letter-spacing:0.977px;-webkit-text-stroke:0.6px currentColor;--d:#e58ab6;'>05<i> </i>марта</span>
<span class="t" style='left:1147.0px;top:553.00px;font-size:10px;color:#9b8fe6;font-style:italic;'>#</span>
<span class="t h" style='left:1078.2px;top:617.00px;font-size:14.5px;color:#fff;letter-spacing:0.378px;-webkit-text-stroke:0.6px currentColor;--d:#e58ab6;'>СРЕДА</span>
<span class="t" style='left:1129.7px;top:621.00px;font-size:11.5px;color:#9b8fe6;font-weight:bold;'>¶</span>
<span class="t h" style='left:1078.2px;top:634.00px;font-size:14.5px;color:#fff;letter-spacing:0.977px;-webkit-text-stroke:0.6px currentColor;--d:#e58ab6;'>06<i> </i>марта</span>
<span class="t" style='left:1147.0px;top:638.00px;font-size:10px;color:#9b8fe6;font-style:italic;'>#</span>
<span class="t h" style='left:1226.0px;top:332.00px;font-size:14.5px;color:#0d74b9;letter-spacing:-0.083px;-webkit-text-stroke:0.55px currentColor;--d:#6fa8d8;'>Неоф.<i> </i>тренировка</span>
<span class="t" style='left:1349.0px;top:336.00px;font-size:11.5px;color:#5f8fd2;font-weight:bold;'>¶</span>
<span class="t h" style='left:1226.0px;top:350.00px;font-size:14.5px;color:#0d74b9;letter-spacing:0.115px;-webkit-text-stroke:0.55px currentColor;--d:#6fa8d8;'>09:00<i> </i>–<i> </i>15:00</span>
<span class="t" style='left:1316.7px;top:354.00px;font-size:10px;color:#6f8fd0;font-style:italic;'>#</span>
<span class="t h" style='left:1226.0px;top:380.00px;font-size:14.5px;color:#0d74b9;letter-spacing:-0.072px;-webkit-text-stroke:0.55px currentColor;--d:#6fa8d8;'>Оф.<i> </i>тренировка</span>
<span class="t h" style='left:1226.0px;top:398.00px;font-size:14.5px;color:#0d74b9;letter-spacing:0.115px;-webkit-text-stroke:0.55px currentColor;--d:#6fa8d8;'>09:00<i> </i>–<i> </i>20:00</span>
<span class="t" style='left:1316.7px;top:402.00px;font-size:10px;color:#6f8fd0;font-style:italic;'>#</span>
<span class="t" style='left:1337.0px;top:384.00px;font-size:11.5px;color:#5f8fd2;font-weight:bold;'>¶</span>
<span class="t h" style='left:1226.0px;top:429.00px;font-size:14.5px;color:#0d74b9;letter-spacing:0.081px;-webkit-text-stroke:0.55px currentColor;--d:#6fa8d8;'>14:00</span>
<span class="t" style='left:1263.0px;top:432.00px;font-size:11.5px;color:#5f8fd2;font-weight:bold;'>¶</span>
<span class="t h" style='left:1226.0px;top:447.00px;font-size:14.5px;color:#0d74b9;letter-spacing:0.452px;-webkit-text-stroke:0.55px currentColor;--d:#6fa8d8;'>1<i> </i>500м<i> </i>Ж/М</span>
<span class="t" style='left:1310.6px;top:451.00px;font-size:11.5px;color:#5f8fd2;font-weight:bold;'>¶</span>
<span class="t h" style='left:1226.0px;top:465.00px;font-size:14.5px;color:#0d74b9;letter-spacing:0.091px;-webkit-text-stroke:0.55px currentColor;--d:#6fa8d8;'>Хиты<i> </i>3000м<i> </i>Эстафета<i> </i>Ж</span>
<span class="t h" style='left:1226.0px;top:483.00px;font-size:14.5px;color:#0d74b9;letter-spacing:0.091px;-webkit-text-stroke:0.55px currentColor;--d:#6fa8d8;'>Хиты<i> </i>5000м<i> </i>Эстафета<i> </i>М</span>
<span class="t h" style='left:1226.0px;top:514.00px;font-size:14.5px;color:#0d74b9;letter-spacing:0.081px;-webkit-text-stroke:0.55px currentColor;--d:#6fa8d8;'>14:00</span>
<span class="t" style='left:1263.0px;top:517.00px;font-size:11.5px;color:#5f8fd2;font-weight:bold;'>¶</span>
<span class="t h" style='left:1226.0px;top:531.00px;font-size:14.5px;color:#0d74b9;letter-spacing:0.464px;-webkit-text-stroke:0.55px currentColor;--d:#6fa8d8;'>500м<i> </i>Ж/М</span>
<span class="t" style='left:1297.7px;top:535.00px;font-size:11.5px;color:#5f8fd2;font-weight:bold;'>¶</span>
<span class="t h" style='left:1226.0px;top:550.00px;font-size:14.5px;color:#0d74b9;letter-spacing:0.357px;-webkit-text-stroke:0.55px currentColor;--d:#6fa8d8;'>(1/2)<i> </i>3000м<i> </i>Эстафета<i> </i>Ж</span>
<span class="t h" style='left:1226.0px;top:568.00px;font-size:14.5px;color:#0d74b9;letter-spacing:0.357px;-webkit-text-stroke:0.55px currentColor;--d:#6fa8d8;'>(1/2)<i> </i>5000м<i> </i>Эстафета<i> </i>М</span>
<span class="t h" style='left:1226.0px;top:598.00px;font-size:14.5px;color:#0d74b9;letter-spacing:0.081px;-webkit-text-stroke:0.55px currentColor;--d:#6fa8d8;'>14:00</span>
<span class="t" style='left:1263.0px;top:602.00px;font-size:11.5px;color:#5f8fd2;font-weight:bold;'>¶</span>
<span class="t h" style='left:1226.0px;top:616.00px;font-size:14.5px;color:#0d74b9;letter-spacing:0.452px;-webkit-text-stroke:0.55px currentColor;--d:#6fa8d8;'>1<i> </i>000м<i> </i>Ж/М</span>
<span class="t" style='left:1315.0px;top:621.00px;font-size:9px;color:#6fa8d8;'>···</span>
<span class="t" style='left:1322.5px;top:620.00px;font-size:11.5px;color:#5f8fd2;font-weight:bold;'>¶</span>
<span class="t h" style='left:1226.0px;top:634.00px;font-size:14.5px;color:#0d74b9;letter-spacing:-0.002px;-webkit-text-stroke:0.55px currentColor;--d:#6fa8d8;'>3000м<i> </i>Эстафета<i> </i>Ж/М</span>
<span class="t h" style='left:1229.5px;top:653.00px;font-size:14.5px;color:#0d74b9;letter-spacing:-0.038px;-webkit-text-stroke:0.55px currentColor;--d:#6fa8d8;'>5000м<i> </i>Эстафета<i> </i>М</span>
<span class="t" style='left:1226.0px;top:657.00px;font-size:9px;color:#6fa8d8;'>·</span>
<span class="t h" style='left:1066.8px;top:688.00px;font-size:14.4px;color:#0d74b9;font-weight:bold;transform:scaleX(1.1030);transform-origin:0 0;--d:#6fa8d8;'>Тестовые<i> </i>спортивные<i> </i>мероприятия</span>
<span class="t" style='left:1353.0px;top:690.00px;font-size:12px;color:#5f8fd2;font-weight:bold;'>¶</span>
<span class="t" style='left:1343.0px;top:710.00px;font-size:12px;color:#5f8fd2;font-weight:bold;'>¶</span>
<span class="t h" style='left:1066.8px;top:726.00px;font-size:16.2px;color:#1f86c5;letter-spacing:-0.353px;word-spacing:2.539px;--d:#7fb2de;'>В<i> </i>рамках<i> </i>тестовых<i> </i>спортивных<i> </i>мероприятий<i> </i>бу-</span>
<span class="t h" style='left:1066.8px;top:745.00px;font-size:16.2px;color:#1f86c5;letter-spacing:-0.439px;word-spacing:1.621px;--d:#7fb2de;'>дут<i> </i>проходить<i> </i>Всероссийские<i> </i>соревнования</span>
<span class="t h" style='left:1066.8px;top:766.00px;font-size:16.2px;color:#1f86c5;letter-spacing:-0.116px;word-spacing:0.698px;--d:#7fb2de;'>с<i> </i>24<i> </i>по<i> </i>29<i> </i>октября<i> </i>2018г.</span>
<span class="t" style='left:1256.0px;top:770.00px;font-size:12px;color:#5f8fd2;font-weight:bold;'>¶</span>
</div></div>
<div class="a" style="left:25px;top:791px;width:1345px;height:11px;background:linear-gradient(#fbfbfb,#eeeeee);border-top:1px solid #d2d2d2"></div>
<div class="a" style="left:47px;top:792px;width:64px;height:10px;background:#fff"></div>
<svg style="left:28px;top:793.500px" width="230" height="8" viewBox="0 0 230 8"><path d="M1 .5V7.500" stroke="#222" stroke-width="1.300"/><path d="M5.500 .5V7.500L1.800 4Z" fill="#222"/><path d="M17 .5V7.500L13 4Z" fill="#222"/><path d="M86 2.500H94L90 6.800Z" fill="#222"/><path d="M101 .5V7.500L105 4Z" fill="#222"/><path d="M112 .5V7.500L116 4Z" fill="#222"/><path d="M117 .5V7.500" stroke="#222" stroke-width="1.300"/><circle cx="129" cy="3.800" r="3.200" fill="#e6e6e6" stroke="#666" stroke-width="1.300"/><path d="M129 1.500V4H131.500" stroke="#333" stroke-width=".9" fill="none"/><path d="M131.500 6.500L134.500 6.500L133 8.300Z" fill="#222"/><circle cx="147.700" cy="4" r="3.900" fill="#e8351c"/><path d="M209.500 3H214.500L212 5.800Z" fill="#333"/></svg>
<span class="t" style='left:50.0px;top:794.00px;font-size:8px;color:#222;'>11</span>
<span class="t" style='left:183.0px;top:794.00px;font-size:8px;color:#222;transform:scaleX(0.9552);transform-origin:0 0;'>3 ошибок</span>
<div class="a" style="left:247px;top:792px;width:1px;height:10px;background:#d0d0d0;"></div>
<div class="a" style="left:693px;top:795px;width:510px;height:5.500px;background:#bdbdbd;border-radius:3px"></div>
<div class="a" style="left:1348px;top:793.500px;width:3px;height:7px;background:#8a8a8a"></div><div class="a" style="left:1353px;top:793.500px;width:3px;height:7px;background:#8a8a8a"></div>
<svg style="left:1361px;top:793px" width="8" height="8" viewBox="0 0 8 8"><path d="M8 0L0 8M8 3L3 8M8 6L6 8" stroke="#9a9a9a" stroke-width="1"/></svg>
<div class="a" style="left:1359px;top:114px;width:11px;height:677px;background:#fafafa;border-left:1px solid #e2e2e2"></div>
<div class="a" style="left:1361.500px;top:339px;width:6px;height:20px;background:#c0c0c0;border-radius:3px"></div>
<div class="a" style="left:0;top:82px;width:25px;height:431px;background:#d8d8d8;border-right:1px solid #8a8a8a;border-bottom:1px solid #777"></div>
<div class="a" style="left:0;top:82px;width:25px;height:8px;background:linear-gradient(#787878,#a6a6a6);border-bottom:1px solid #666"></div>
<svg style="left:4px;top:83.5px" width="8" height="5" viewBox="0 0 8 5"><path d="M0 0L3 2.5L0 5ZM4 0L7 2.5L4 5Z" fill="#222"/></svg>
<div class="a" style="left:6px;top:94.5px;width:13px;height:2px;border-top:1px dotted #888;border-bottom:1px dotted #888"></div>
<div class="a" style="left:3px;top:191px;width:20px;height:17px;background:#b3b3b3;border-radius:2px"></div>
<div class="a" style="left:2.5px;top:475.5px;width:20.5px;height:16.5px;background:#bcbcbc;border-radius:2px"></div>
<div class="a" style="left:2.5px;top:494.5px;width:20.5px;height:16.5px;background:#bcbcbc;border-radius:2px"></div>
<div class="a" style="left:4px;top:188px;width:18px;height:1px;background:#9a9a9a;"></div>
<div class="a" style="left:4px;top:362px;width:18px;height:1px;background:#9a9a9a;"></div>
<div class="a" style="left:4px;top:433px;width:18px;height:1px;background:#9a9a9a;"></div>
<svg style="left:3.5px;top:103px" width="18" height="16" viewBox="-9 -8 18 16"><path d="M-3 -6L-3 5L-0.3 2.6L1.6 6.5L3.2 5.7L1.4 2L4.6 1.8Z" fill="#1e1e1e"/></svg><svg style="left:3.5px;top:120px" width="18" height="16" viewBox="-9 -8 18 16"><path d="M-3 -6L-3 5L-0.3 2.6L1.6 6.5L3.2 5.7L1.4 2L4.6 1.8Z" fill="#fff" stroke="#1e1e1e" stroke-width="1"/></svg><svg style="left:3.5px;top:137px" width="18" height="16" viewBox="-9 -8 18 16"><path d="M-5 -6H1.5L4.5 -3V6H-5Z" fill="#fff" stroke="#1e1e1e" stroke-width="1.1"/><path d="M1.5 -6V-3H4.5" fill="none" stroke="#1e1e1e" stroke-width="1"/><path d="M1.5 1L1.5 7L3 5.6L4 7.6L5 7.1L4 5.2L5.8 5Z" fill="#1e1e1e"/></svg><svg style="left:3.5px;top:153px" width="18" height="16" viewBox="-9 -8 18 16"><path d="M-7 -5V5M7 -5V5M-5 0H5M-5 0L-2.4 -2.4M-5 0L-2.4 2.4M5 0L2.4 -2.4M5 0L2.4 2.4" stroke="#1e1e1e" stroke-width="1.2" fill="none"/></svg><svg style="left:3.5px;top:169px" width="18" height="16" viewBox="-9 -8 18 16"><path d="M-6 0V5.5H6V0" fill="none" stroke="#1e1e1e" stroke-width="1.3"/><path d="M-4 3.2H4" stroke="#1e1e1e" stroke-width="1.6" stroke-dasharray="1.4 1"/><path d="M-3.5 -6.5L0 -3L-0 -1.2 M-2 -2.8H0.2V-5" stroke="#1e1e1e" stroke-width="1.2" fill="none"/></svg><span class="t" style="left:6px;top:187.5px;font-family:'Liberation Serif';font-size:21px;color:#1a1a1a">T</span><svg style="left:3.5px;top:208px" width="18" height="16" viewBox="-9 -8 18 16"><path d="M-6 6L6 -6" stroke="#1e1e1e" stroke-width="1.2"/></svg><svg style="left:3.5px;top:224px" width="18" height="16" viewBox="-9 -8 18 16"><path d="M-6.5 6.5L-4.5 0.5L1 -5L5 -1L-0.5 4.5Z" fill="#e8e8e8" stroke="#1e1e1e" stroke-width="1.1"/><path d="M-6.5 6.5L-2 2" stroke="#1e1e1e" stroke-width="1"/><path d="M1.5 -6.5L6.5 -1.5" stroke="#1e1e1e" stroke-width="2"/></svg><svg style="left:3.5px;top:241px" width="18" height="16" viewBox="-9 -8 18 16"><path d="M-6 6L-5 2L2.5 -5.5L5.5 -2.5L-2 5Z" fill="#777" stroke="#1e1e1e" stroke-width="1"/><path d="M-6 6L-5 2L-2 5Z" fill="#1e1e1e"/></svg><svg style="left:3.5px;top:257px" width="18" height="16" viewBox="-9 -8 18 16"><rect x="-6" y="-5.5" width="12" height="11" fill="#e6e6e6" stroke="#1e1e1e" stroke-width="1.3"/><path d="M-6 -5.5L6 5.5M6 -5.5L-6 5.5" stroke="#1e1e1e" stroke-width="1.1"/></svg><svg style="left:3.5px;top:273px" width="18" height="16" viewBox="-9 -8 18 16"><rect x="-6" y="-5" width="12" height="10" fill="#9a9a9a" stroke="#1e1e1e" stroke-width="1.2"/></svg><svg style="left:3.5px;top:293px" width="18" height="16" viewBox="-9 -8 18 16"><path d="M-6 -5L4 3M-6 2L5 -5" stroke="#1e1e1e" stroke-width="1.3"/><circle cx="4" cy="4.5" r="2" fill="none" stroke="#1e1e1e" stroke-width="1.1"/><circle cx="5" cy="-1" r="1.8" fill="none" stroke="#1e1e1e" stroke-width="1.1"/></svg><svg style="left:3.5px;top:310px" width="18" height="16" viewBox="-9 -8 18 16"><rect x="-4" y="-4" width="10" height="9" fill="none" stroke="#1e1e1e" stroke-width="1.1" stroke-dasharray="2 1.4"/><path d="M-7 -6.5L-7 2L-4.8 0L-3 3.4L-1.6 2.7L-3.2 -0.6L-0.6 -0.8Z" fill="#1e1e1e"/></svg><svg style="left:3.5px;top:327px" width="18" height="16" viewBox="-9 -8 18 16"><defs><linearGradient id="tg1"><stop offset="0" stop-color="#111"/><stop offset="1" stop-color="#eee"/></linearGradient></defs><rect x="-6" y="-5" width="12" height="10" fill="url(#tg1)" stroke="#1e1e1e" stroke-width="1"/></svg><svg style="left:3.5px;top:343px" width="18" height="16" viewBox="-9 -8 18 16"><defs><linearGradient id="tg2" x1="0" y1="0" x2="0" y2="1"><stop offset="0" stop-color="#222"/><stop offset="1" stop-color="#ccc"/></linearGradient></defs><rect x="-6" y="-5" width="12" height="10" fill="url(#tg2)" stroke="#1e1e1e" stroke-width="1"/></svg><svg style="left:3.5px;top:365px" width="18" height="16" viewBox="-9 -8 18 16"><path d="M-6 -5H6V3L3 6H-6Z" fill="#f2f2f2" stroke="#1e1e1e" stroke-width="1.2"/><path d="M-3.5 -2H3.5M-3.5 0.5H3.5M-3.5 3H0" stroke="#1e1e1e" stroke-width=".9"/></svg><svg style="left:3.5px;top:382px" width="18" height="16" viewBox="-9 -8 18 16"><path d="M-6 6.5L-5 3L1.5 -3.5L3.5 -1.5L-3 5Z" fill="#ddd" stroke="#1e1e1e" stroke-width="1"/><path d="M0.5 -5.5L5.5 -0.5M2 -4L5 -7L7 -5L4 -2" stroke="#1e1e1e" stroke-width="1.8" fill="none"/></svg><svg style="left:3.5px;top:399px" width="18" height="16" viewBox="-9 -8 18 16"><path d="M-4 6C-5 3 -7 1 -6.5 -0.5C-5.5 -1.5 -4.5 0 -3.5 1.5V-4.5C-3.5 -6 -1.8 -6 -1.8 -4.5V-5.8C-1.8 -7.2 0 -7.2 0 -5.8V-4.8C0 -6.2 1.8 -6.2 1.8 -4.8V-3.5C1.8 -4.8 3.6 -4.8 3.6 -3.5V2C3.6 4 3 5 2.5 6Z" fill="#f4f4f4" stroke="#1e1e1e" stroke-width=".9"/></svg><svg style="left:3.5px;top:415px" width="18" height="16" viewBox="-9 -8 18 16"><circle cx="-1.5" cy="-1.5" r="4.2" fill="#eee" stroke="#1e1e1e" stroke-width="1.4"/><path d="M1.6 1.6L6.5 6.5" stroke="#1e1e1e" stroke-width="2.2"/></svg><div class="a" style="left:4px;top:439px;width:10.5px;height:10px;background:#fff;border:1.2px solid #111"></div><span class="t" style="left:6.8px;top:440.300px;font-size:7.500px;font-weight:bold;color:#111">?</span><div class="a" style="left:10.5px;top:444.500px;width:10px;height:9.500px;border:2px solid #111;background:#d8d8d8"></div><div class="a" style="left:12.5px;top:446.500px;width:6px;height:5.500px;border:1px solid #fff"></div><svg style="left:16px;top:437.500px" width="6" height="6" viewBox="0 0 7 7"><path d="M1 0.8H5.5V5.5M5.5 0.8" fill="none" stroke="#111" stroke-width=".9"/></svg><div class="a" style="left:4.5px;top:454px;width:5.5px;height:5.500px;background:#fff;border:1px solid #111"></div><div class="a" style="left:7px;top:457px;width:5.500px;height:5.500px;background:#222;border:1px solid #111"></div><svg style="left:4.5px;top:454px" width="6" height="6" viewBox="0 0 6 6"><path d="M0 6L6 0" stroke="#e02020" stroke-width="1.300"/></svg><div class="a" style="left:4.5px;top:464px;width:7px;height:6.500px;background:linear-gradient(135deg,#111,#eee);border:1px solid #555"></div><span class="t" style="left:15.5px;top:463.500px;font-family:'Liberation Serif';font-size:8px;font-weight:bold;color:#111">T</span><div class="a" style="left:8px;top:478.500px;width:9.500px;height:9.500px;background:#bfe0f4;border:1.3px solid #222"></div><div class="a" style="left:8px;top:498.500px;width:9.500px;height:8.500px;background:#999;border:1.3px solid #333"></div><div class="a" style="left:10px;top:501.500px;width:5.500px;height:3.500px;background:#ddd"></div><svg style="left:20px;top:180px" width="3" height="3" viewBox="0 0 3 3"><path d="M3 0V3H0Z" fill="#111"/></svg><svg style="left:20px;top:203px" width="3" height="3" viewBox="0 0 3 3"><path d="M3 0V3H0Z" fill="#111"/></svg><svg style="left:20px;top:236px" width="3" height="3" viewBox="0 0 3 3"><path d="M3 0V3H0Z" fill="#111"/></svg><svg style="left:20px;top:252px" width="3" height="3" viewBox="0 0 3 3"><path d="M3 0V3H0Z" fill="#111"/></svg><svg style="left:20px;top:269px" width="3" height="3" viewBox="0 0 3 3"><path d="M3 0V3H0Z" fill="#111"/></svg><svg style="left:20px;top:285px" width="3" height="3" viewBox="0 0 3 3"><path d="M3 0V3H0Z" fill="#111"/></svg><svg style="left:18px;top:322px" width="3" height="3" viewBox="0 0 3 3"><path d="M3 0V3H0Z" fill="#111"/></svg><svg style="left:18px;top:394px" width="3" height="3" viewBox="0 0 3 3"><path d="M3 0V3H0Z" fill="#111"/></svg><svg style="left:18px;top:487.5px" width="3" height="3" viewBox="0 0 3 3"><path d="M3 0V3H0Z" fill="#111"/></svg><svg style="left:18px;top:507px" width="3" height="3" viewBox="0 0 3 3"><path d="M3 0V3H0Z" fill="#111"/></svg>
<div class="a" style="left:0;top:514px;width:120px;height:42px;background:#e9e9e9;border:1px solid #8e8e8e;border-radius:3px 3px 2px 2px;box-shadow:0 2px 5px rgba(0,0,0,.35)"></div>
<div class="a" style="left:0;top:514px;width:120px;height:10px;background:linear-gradient(#8e8e8e,#b5b5b5);border:1px solid #6f6f6f;border-radius:3px 3px 0 0"></div>
<span class="t" style='left:4.0px;top:515.00px;font-size:9px;color:#222;font-weight:bold;'>×</span>
<svg style="left:109px;top:516.5px" width="8" height="5" viewBox="0 0 8 5"><path d="M0 0L3 2.5L0 5ZM4 0L7 2.5L4 5Z" fill="#222"/></svg>
<div class="a" style="left:52px;top:527.5px;width:15px;height:2px;border-top:1px dotted #888;border-bottom:1px dotted #888"></div>
<span class="t" style='left:29.5px;top:539.00px;font-size:8.6px;color:#222;font-weight:bold;transform:scaleX(0.9324);transform-origin:0 0;'>Фоновые операци...</span>
<svg style="left:7px;top:534px" width="18" height="18" viewBox="-9 -9 18 18"><path d="M3.50 0.00L7.50 0.00" stroke="#333" stroke-width="1.1" stroke-linecap="round" opacity="0.30"/><path d="M3.03 1.75L6.50 3.75" stroke="#333" stroke-width="1.1" stroke-linecap="round" opacity="0.36"/><path d="M1.75 3.03L3.75 6.50" stroke="#333" stroke-width="1.1" stroke-linecap="round" opacity="0.43"/><path d="M0.00 3.50L0.00 7.50" stroke="#333" stroke-width="1.1" stroke-linecap="round" opacity="0.49"/><path d="M-1.75 3.03L-3.75 6.50" stroke="#333" stroke-width="1.1" stroke-linecap="round" opacity="0.55"/><path d="M-3.03 1.75L-6.50 3.75" stroke="#333" stroke-width="1.1" stroke-linecap="round" opacity="0.62"/><path d="M-3.50 0.00L-7.50 0.00" stroke="#333" stroke-width="1.1" stroke-linecap="round" opacity="0.68"/><path d="M-3.03 -1.75L-6.50 -3.75" stroke="#333" stroke-width="1.1" stroke-linecap="round" opacity="0.75"/><path d="M-1.75 -3.03L-3.75 -6.50" stroke="#333" stroke-width="1.1" stroke-linecap="round" opacity="0.81"/><path d="M-0.00 -3.50L-0.00 -7.50" stroke="#333" stroke-width="1.1" stroke-linecap="round" opacity="0.87"/><path d="M1.75 -3.03L3.75 -6.50" stroke="#333" stroke-width="1.1" stroke-linecap="round" opacity="0.94"/><path d="M3.03 -1.75L6.50 -3.75" stroke="#333" stroke-width="1.1" stroke-linecap="round" opacity="1.00"/></svg>
<div class="a" style="left:1370.5px;top:82px;width:130px;height:461.5px;background:#efefef;border-left:1px solid #8c8c8c;border-bottom:1px solid #7d7d7d;box-shadow:-1px 2px 4px rgba(0,0,0,.25)"></div>
<div class="a" style="left:1370.5px;top:82px;width:130px;height:9px;background:linear-gradient(#858585,#b2b2b2);border-bottom:1px solid #6a6a6a"></div>
<svg style="left:1487px;top:84px" width="8" height="5" viewBox="0 0 8 5"><path d="M3 0L0 2.5L3 5ZM7 0L4 2.5L7 5Z" fill="#222"/></svg>
<div class="a" style="left:1371.5px;top:144.4px;width:128.5px;height:1.3px;background:#9b9b9b;"></div>
<div class="a" style="left:1371.5px;top:219.4px;width:128.5px;height:1.3px;background:#9b9b9b;"></div>
<div class="a" style="left:1371.5px;top:273.9px;width:128.5px;height:1.3px;background:#9b9b9b;"></div>
<div class="a" style="left:1371.5px;top:349.7px;width:128.5px;height:1.3px;background:#9b9b9b;"></div>
<div class="a" style="left:1371.5px;top:403.6px;width:128.5px;height:1.3px;background:#9b9b9b;"></div>
<div class="a" style="left:1371.5px;top:479.1px;width:128.5px;height:1.3px;background:#9b9b9b;"></div>
<div class="a" style="left:1371.5px;top:511.4px;width:128.5px;height:1.3px;background:#9b9b9b;"></div>
<div class="a" style="left:1427px;top:94.6px;width:15px;height:2px;border-top:1px dotted #999;border-bottom:1px dotted #999"></div>
<div class="a" style="left:1427px;top:148.7px;width:15px;height:2px;border-top:1px dotted #999;border-bottom:1px dotted #999"></div>
<div class="a" style="left:1427px;top:224.7px;width:15px;height:2px;border-top:1px dotted #999;border-bottom:1px dotted #999"></div>
<div class="a" style="left:1427px;top:278.3px;width:15px;height:2px;border-top:1px dotted #999;border-bottom:1px dotted #999"></div>
<div class="a" style="left:1427px;top:354px;width:15px;height:2px;border-top:1px dotted #999;border-bottom:1px dotted #999"></div>
<div class="a" style="left:1427px;top:408px;width:15px;height:2px;border-top:1px dotted #999;border-bottom:1px dotted #999"></div>
<div class="a" style="left:1427px;top:484px;width:15px;height:2px;border-top:1px dotted #999;border-bottom:1px dotted #999"></div>
<div class="a" style="left:1427px;top:516px;width:15px;height:2px;border-top:1px dotted #999;border-bottom:1px dotted #999"></div>
<span class="t" style='left:1400.0px;top:106.00px;font-size:9.2px;color:#1f1f1f;font-weight:bold;transform:scaleX(0.8870);transform-origin:0 0;'>Страницы</span>
<span class="t" style='left:1400.0px;top:128.00px;font-size:9.2px;color:#1f1f1f;font-weight:bold;transform:scaleX(0.8677);transform-origin:0 0;'>Слои</span>
<span class="t" style='left:1400.0px;top:161.00px;font-size:9.2px;color:#1f1f1f;font-weight:bold;transform:scaleX(0.8725);transform-origin:0 0;'>Образцы</span>
<span class="t" style='left:1400.0px;top:182.00px;font-size:9.2px;color:#1f1f1f;font-weight:bold;transform:scaleX(0.8560);transform-origin:0 0;'>Глифы</span>
<span class="t" style='left:1400.0px;top:204.00px;font-size:9.2px;color:#1f1f1f;font-weight:bold;transform:scaleX(0.9015);transform-origin:0 0;'>Обтекание текстом</span>
<span class="t" style='left:1400.0px;top:236.00px;font-size:9.2px;color:#1f1f1f;font-weight:bold;transform:scaleX(0.8885);transform-origin:0 0;'>Обводка</span>
<span class="t" style='left:1400.0px;top:258.00px;font-size:9.2px;color:#1f1f1f;font-weight:bold;transform:scaleX(0.9001);transform-origin:0 0;'>Градиент</span>
<span class="t" style='left:1400.0px;top:290.00px;font-size:9.2px;color:#1f1f1f;font-weight:bold;transform:scaleX(0.8948);transform-origin:0 0;'>Материал</span>
<span class="t" style='left:1400.0px;top:312.00px;font-size:9.2px;color:#1f1f1f;font-weight:bold;transform:scaleX(0.8731);transform-origin:0 0;'>Гиперссылки</span>
<span class="t" style='left:1400.0px;top:334.00px;font-size:9.2px;color:#1f1f1f;font-weight:bold;transform:scaleX(0.8530);transform-origin:0 0;'>Эффекты</span>
<span class="t" style='left:1400.0px;top:366.00px;font-size:9.2px;color:#1f1f1f;font-weight:bold;transform:scaleX(0.8981);transform-origin:0 0;'>Абзац</span>
<span class="t" style='left:1400.0px;top:388.00px;font-size:9.2px;color:#1f1f1f;font-weight:bold;transform:scaleX(0.8895);transform-origin:0 0;'>Стили абзацев</span>
<span class="t" style='left:1400.0px;top:419.00px;font-size:9.2px;color:#1f1f1f;font-weight:bold;transform:scaleX(0.8513);transform-origin:0 0;'>Символ</span>
<span class="t" style='left:1400.0px;top:442.00px;font-size:9.2px;color:#1f1f1f;font-weight:bold;transform:scaleX(0.8733);transform-origin:0 0;'>Стили символов</span>
<span class="t" style='left:1400.0px;top:464.00px;font-size:9.2px;color:#1f1f1f;font-weight:bold;transform:scaleX(0.9117);transform-origin:0 0;'>Сценарии</span>
<span class="t" style='left:1400.0px;top:496.00px;font-size:9.2px;color:#1f1f1f;font-weight:bold;transform:scaleX(0.9038);transform-origin:0 0;'>Цветоделение</span>
<span class="t" style='left:1400.0px;top:528.00px;font-size:9.2px;color:#1f1f1f;font-weight:bold;transform:scaleX(0.8649);transform-origin:0 0;'>Связи</span>
<svg style="left:1377px;top:102px" width="18" height="16" viewBox="-9 -8 18 16"><path d="M-6 -3.5H-1.5V-5.5H1.5V-3.5H6V4H1.5V5H-1.5V4H-6Z" fill="#f7f7f7" stroke="#222" stroke-width="1"/><path d="M-1.5 -3.5V4M1.5 -3.5V4" stroke="#222" stroke-width=".9"/></svg><svg style="left:1377px;top:124px" width="18" height="16" viewBox="-9 -8 18 16"><path d="M0 -5.5L6.5 -1.5L0 2.5L-6.5 -1.5Z" fill="#f4f4f4" stroke="#222" stroke-width=".9"/><path d="M-6.5 1L0 5L6.5 1L4 -0.3L0 2.5L-4 -0.3Z" fill="#333"/></svg><svg style="left:1377px;top:156.5px" width="18" height="16" viewBox="-9 -8 18 16"><rect x="-6.8" y="-5.8" width="13.8" height="11.4" fill="#222"/><rect x="-6" y="-5" width="2.6" height="2.6" fill="#222"/><rect x="-2.7" y="-5" width="2.6" height="2.6" fill="#aaa"/><rect x="0.6" y="-5" width="2.6" height="2.6" fill="#555"/><rect x="3.9" y="-5" width="2.6" height="2.6" fill="#ddd"/><rect x="-6" y="-1.5" width="2.6" height="2.6" fill="#888"/><rect x="-2.7" y="-1.5" width="2.6" height="2.6" fill="#333"/><rect x="0.6" y="-1.5" width="2.6" height="2.6" fill="#bbb"/><rect x="3.9" y="-1.5" width="2.6" height="2.6" fill="#444"/><rect x="-6" y="2" width="2.6" height="2.6" fill="#333"/><rect x="-2.7" y="2" width="2.6" height="2.6" fill="#999"/><rect x="0.6" y="2" width="2.6" height="2.6" fill="#222"/><rect x="3.9" y="2" width="2.6" height="2.6" fill="#eee"/></svg><span class="t" style="left:1378.5px;top:179px;font-family:'Liberation Serif';font-style:italic;font-size:13.5px;color:#222">Aa</span><svg style="left:1377px;top:200px" width="18" height="16" viewBox="-9 -8 18 16"><rect x="-6.5" y="-5" width="13" height="10" fill="#ddd" stroke="#888" stroke-width=".8"/><path d="M-6 -3.2H6M-6 -1H6M-6 1.2H6M-6 3.4H6" stroke="#888" stroke-width=".8"/><ellipse cx="0" cy="0" rx="3.8" ry="2.6" fill="#111"/></svg><svg style="left:1377px;top:232px" width="18" height="16" viewBox="-9 -8 18 16"><path d="M-6.5 -5.5H6.5" stroke="#222" stroke-width=".8" stroke-dasharray="1 1"/><path d="M-6.5 -3H6.5" stroke="#222" stroke-width="1.2"/><path d="M-6.5 0H6.5" stroke="#222" stroke-width="1.8"/><path d="M-6.5 3.8H6.5" stroke="#222" stroke-width="2.6"/></svg><svg style="left:1377px;top:254px" width="18" height="16" viewBox="-9 -8 18 16"><defs><linearGradient id="pg1"><stop offset="0" stop-color="#111"/><stop offset="1" stop-color="#f4f4f4"/></linearGradient></defs><rect x="-6.5" y="-4.5" width="13" height="9.5" fill="url(#pg1)" stroke="#333" stroke-width=".9"/></svg><svg style="left:1377px;top:286px" width="18" height="16" viewBox="-9 -8 18 16"><rect x="-5.5" y="-6" width="11" height="12.5" fill="#f6f6f6" stroke="#333" stroke-width="1"/><rect x="-3" y="-4" width="4" height="4.5" fill="#bbb" stroke="#555" stroke-width=".6"/><path d="M-3 2.5H3.5M-3 4.5H3.5" stroke="#666" stroke-width=".8"/></svg><span class="t" style="left:1379px;top:306.500px;font-size:8px;color:#222;text-decoration:underline">abc</span><svg style="left:1379px;top:313.5px" width="18" height="16" viewBox="-9 -8 18 16"><path d="M-2 -3V3C-3 2 -4 2.5 -3.5 3.5L-1.5 6.5H3.5L4.5 3V0.5C4.5 -0.5 3.3 -0.5 3.3 0.3C3.3 -0.9 2 -0.9 2 0C2 -1.2 0.5 -1.2 0.5 -0.2V-3C0.5 -4.2 -2 -4.2 -2 -3Z" fill="#fafafa" stroke="#222" stroke-width=".8"/></svg><span class="t" style="left:1378.5px;top:330px;font-family:'Liberation Serif';font-style:italic;font-weight:bold;font-size:14px;color:#222">fx</span><span class="t" style="left:1381px;top:362.5px;font-size:14px;font-weight:bold;color:#333">¶</span><span class="t" style="left:1384px;top:384px;font-size:13px;font-weight:bold;color:#333">¶</span><svg style="left:1372px;top:387.5px" width="18" height="16" viewBox="-9 -8 18 16"><rect x="-3" y="-2" width="4.5" height="4.5" fill="#eee" stroke="#222" stroke-width=".8"/><rect x="-1" y="-0.2" width="4.5" height="4.5" fill="#bbb" stroke="#222" stroke-width=".8"/></svg><span class="t" style="left:1378.5px;top:415.5px;font-size:14.5px;color:#222">A</span><div class="a" style="left:1389.5px;top:416px;width:1.3px;height:14px;background:#222"></div><span class="t" style="left:1381px;top:436.5px;font-size:15px;color:#222">A</span><svg style="left:1372px;top:442.5px" width="18" height="16" viewBox="-9 -8 18 16"><rect x="-3" y="-2" width="4.5" height="4.5" fill="#eee" stroke="#222" stroke-width=".8"/><rect x="-1" y="-0.2" width="4.5" height="4.5" fill="#bbb" stroke="#222" stroke-width=".8"/></svg><svg style="left:1377px;top:459.6px" width="18" height="16" viewBox="-9 -8 18 16"><path d="M5 -4.5C3 -6.5 -5 -6 -5.5 -2.5C-6 0.5 3 0 2.5 2C2 3.5 -3 3.5 -5.5 2L-6 4.5C-3 7 5.5 6.5 6 2.5C6.5 -1 -2 -0.5 -1.5 -2.5C-1 -3.8 3 -3.5 4.5 -2.5Z" fill="#444" stroke="#111" stroke-width=".6"/></svg><svg style="left:1377px;top:491.3px" width="18" height="16" viewBox="-9 -8 18 16"><rect x="-5" y="-6.5" width="10" height="13" fill="#f0f0f0" stroke="#333" stroke-width=".9"/><path d="M-5 -6.5L0 0L5 -6.5Z" fill="#555"/><path d="M-5 6.5L0 0.5L5 6.5Z" fill="#111"/></svg><svg style="left:1377px;top:523.3px" width="18" height="16" viewBox="-9 -8 18 16"><ellipse cx="-2.8" cy="-1.5" rx="3.3" ry="2.4" fill="none" stroke="#222" stroke-width="1.3" transform="rotate(25 -2.8 -1.5)"/><ellipse cx="2.8" cy="1.5" rx="3.3" ry="2.4" fill="none" stroke="#222" stroke-width="1.3" transform="rotate(25 2.8 1.5)"/></svg>
<div class="a" style="left:284px;top:802px;width:932px;height:42px;background:#ababab;border-top:1px solid #c4c4c4;border-left:1px solid #bdbdbd;border-right:1px solid #9a9a9a"></div>
<svg style="left:287.6px;top:806.6px" width="30" height="30" viewBox="0 0 30 30"><defs><linearGradient id="fa" x1="0" y1="0" x2="0" y2="1"><stop offset="0" stop-color="#3fb4f5"/><stop offset="1" stop-color="#1a6fe0"/></linearGradient><linearGradient id="fb" x1="0" y1="0" x2="0" y2="1"><stop offset="0" stop-color="#f4f8fb"/><stop offset="1" stop-color="#cfe0ee"/></linearGradient></defs><rect x="1.500" y="2.500" width="27" height="25.500" rx="2.500" fill="url(#fa)"/><path d="M17 2.500H26C27.500 2.500 28.500 3.500 28.500 5V25.500C28.500 27 27.500 28 26 28H17.500C16.500 22 16 19 16.500 16H13.500C14 10 15.500 5.500 17 2.500Z" fill="url(#fb)"/><path d="M8 19.500C11.500 24 19.500 24 23 19.500" fill="none" stroke="#163d6b" stroke-width="1.200" stroke-linecap="round"/><path d="M9.500 9.500V12.500M21.500 9.500V12.500" stroke="#163d6b" stroke-width="1.400" stroke-linecap="round"/></svg><div class="a" style="left:301.4px;top:839.600px;width:2.400px;height:2.400px;border-radius:50%;background:#111"></div><svg style="left:322.4px;top:806.6px" width="30" height="30" viewBox="0 0 30 30"><g transform="rotate(-6 15 15)"><rect x="2.500" y="3" width="25" height="24" rx="2.500" fill="#fbfbfb" stroke="#c9c9c9" stroke-width=".6"/><path d="M2.500 9.500V5.500C2.500 4 3.500 3 5 3H25C26.500 3 27.500 4 27.500 5.500V9.500Z" fill="#e8453c"/><text x="15" y="8.300" font-family="Liberation Sans" font-size="4.800" font-weight="bold" fill="#fff" text-anchor="middle">ФЕВР.</text><text x="15" y="23.500" font-family="Liberation Sans" font-size="14.500" fill="#333" text-anchor="middle">18</text></g></svg><svg style="left:357.8px;top:806.6px" width="30" height="30" viewBox="0 0 30 30"><defs><linearGradient id="sa" x1="0" y1="0" x2="0" y2="1"><stop offset="0" stop-color="#4fc3f7"/><stop offset="1" stop-color="#1a5fd0"/></linearGradient></defs><circle cx="15" cy="15" r="14.300" fill="#e9e9e9" stroke="#c0c0c0" stroke-width=".6"/><circle cx="15" cy="15" r="12.600" fill="url(#sa)"/><circle cx="15" cy="15" r="11.300" fill="none" stroke="#cfe8fb" stroke-width="1.400" stroke-dasharray=".5 1.100" opacity=".8"/><path d="M23.500 6.500L16.300 16.300L13.700 13.700Z" fill="#f0392b"/><path d="M6.500 23.500L13.700 13.700L16.300 16.300Z" fill="#f5f5f5"/></svg><div class="a" style="left:371.6px;top:839.600px;width:2.400px;height:2.400px;border-radius:50%;background:#111"></div><svg style="left:392.6px;top:806.6px" width="30" height="30" viewBox="0 0 30 30"><g transform="rotate(-7 15 15)"><rect x="5" y="2.500" width="20" height="25" fill="#f3f3f3" stroke="#cfcfcf" stroke-width=".7" stroke-dasharray="1.500 .7"/><rect x="6.800" y="4.300" width="16.400" height="21.400" fill="#5b9fdf"/><rect x="6.800" y="17" width="16.400" height="8.700" fill="#8ec2ee"/><path d="M10.500 8.500C12.500 10.500 14 11 15.500 13.500C17 14 19.500 13.500 21 15.500C19 16.500 17 17 15 17.500L13 20L12.500 17C11 15 10 12 10.500 8.500Z" fill="#8a6a42"/><path d="M12.500 10.500C13.500 12.500 14.500 14 15.500 16" stroke="#e9dcc4" stroke-width="1.300"/></g><circle cx="24" cy="24" r="3.800" fill="#9a9a9a" opacity=".75" stroke="#d0d0d0" stroke-width=".6"/></svg><div class="a" style="left:406.4px;top:839.600px;width:2.400px;height:2.400px;border-radius:50%;background:#111"></div><svg style="left:428.8px;top:806.6px" width="30" height="30" viewBox="0 0 30 30"><g transform="rotate(-4 15 15)"><rect x="3" y="3" width="24.500" height="24.500" rx="1.500" fill="#fbfaf3" stroke="#d6d1bd" stroke-width=".7"/><path d="M3 8.500V4.500C3 3.600 3.700 3 4.500 3H26C26.900 3 27.500 3.600 27.500 4.500V8.500Z" fill="#f8d548"/><g stroke="#dcd8c7" stroke-width=".6"><path d="M4 11.500H26.500M4 14H26.500M4 16.500H26.500M4 19H26.500M4 21.500H26.500M4 24H26.500"/></g></g></svg><svg style="left:463.4px;top:806.6px" width="30" height="30" viewBox="0 0 30 30"><defs><linearGradient id="it" x1="0" y1="0" x2="1" y2="1"><stop offset="0" stop-color="#f95fa8"/><stop offset=".5" stop-color="#c86dd7"/><stop offset="1" stop-color="#4aa8f7"/></linearGradient><linearGradient id="it2" x1="0" y1="0" x2="0" y2="1"><stop offset="0" stop-color="#fb5c74"/><stop offset="1" stop-color="#5c8cf5"/></linearGradient></defs><circle cx="15" cy="15" r="14" fill="url(#it)"/><circle cx="15" cy="15" r="11.800" fill="#fbfbfd"/><path d="M11.500 9.800L21 7.500V18.500C21 21.500 16.500 21.800 16.500 19.300C16.500 17.600 18.800 17 19.600 17.300V11L12.900 12.600V20.500C12.900 23.500 8.400 23.800 8.400 21.300C8.400 19.600 10.700 19 11.500 19.300Z" fill="url(#it2)"/></svg><div class="a" style="left:477.2px;top:839.600px;width:2.400px;height:2.400px;border-radius:50%;background:#111"></div><svg style="left:498.6px;top:806.6px" width="30" height="30" viewBox="0 0 30 30"><circle cx="15" cy="15" r="14.600" fill="#1f6bbf"/><path d="M4 17.500C8 15.500 11.500 16.500 14.500 19.500C18 15.500 23 14.500 28 17C24 16.800 19.500 19 15.500 24C12 19.500 8.500 17.800 4 17.500Z" fill="#fff"/><path d="M11.500 9.500C14 8.500 16 9.200 17.500 11C19.500 8.800 22.500 8.300 25 9.600C22.500 9.700 20 11.200 18 14C16.200 11.500 14 10 11.500 9.500Z" fill="#fff"/></svg><div class="a" style="left:512.4px;top:839.600px;width:2.400px;height:2.400px;border-radius:50%;background:#111"></div><svg style="left:533.8px;top:806.6px" width="30" height="30" viewBox="0 0 30 30"><rect x="1.500" y="1.500" width="27" height="27.500" fill="#f7f7f7" stroke="#c4c4c4" stroke-width=".8"/><rect x="1.500" y="1.500" width="27" height="1.800" fill="#d8232a"/><path d="M6 24C9.500 22 13 16 14.500 9.500C15 7.200 13.500 6.500 13.200 8.500C12.800 12.500 17.500 19.500 23 20.500C25.500 20.800 25 19 22.500 19C17.500 19 9.500 21.500 6 24Z" fill="none" stroke="#d8232a" stroke-width="1.400"/></svg><div class="a" style="left:547.6px;top:839.600px;width:2.400px;height:2.400px;border-radius:50%;background:#111"></div><svg style="left:569px;top:806.6px" width="30" height="30" viewBox="0 0 30 30"><path d="M2.500 3.500C6 5 10.500 5 15 3.500C19.500 5 24 5 27.500 3.500C26 7.500 26 11 27 15C26 19 26 22.500 27.500 26.500C24 25 19.500 25 15 26.500C10.500 25 6 25 2.500 26.500C4 22.500 4 19 3 15C4 11 4 7.500 2.500 3.500Z" fill="#2a9a50" stroke="#e04a3a" stroke-width="1"/><path d="M15 3.500C19.500 5 24 5 27.500 3.500C26 7.500 26 11 27 15H15Z" fill="#2a9fc4"/><path d="M15 15H27C26 19 26 22.500 27.500 26.500C24 25 19.500 25 15 26.500Z" fill="#9ccc3c"/><path d="M2.500 3.500C6 5 10.500 5 15 3.500V15H3C4 11 4 7.500 2.500 3.500Z" fill="#1d9a8a"/><path d="M15 3.500V26.500M3 15H27" stroke="#e04a3a" stroke-width="1"/></svg><svg style="left:604.2px;top:806.6px" width="30" height="30" viewBox="0 0 30 30"><path d="M2.500 3.500C6 5 10.500 5 15 3.500C19.500 5 24 5 27.500 3.500C26 7.500 26 11 27 15C26 19 26 22.500 27.500 26.500C24 25 19.500 25 15 26.500C10.500 25 6 25 2.500 26.500C4 22.500 4 19 3 15C4 11 4 7.500 2.500 3.500Z" fill="#2a9a50" stroke="#e04a3a" stroke-width="1"/><path d="M15 3.500C19.500 5 24 5 27.500 3.500C26 7.500 26 11 27 15H15Z" fill="#2a9fc4"/><path d="M15 15H27C26 19 26 22.500 27.500 26.500C24 25 19.500 25 15 26.500Z" fill="#9ccc3c"/><path d="M2.500 3.500C6 5 10.500 5 15 3.500V15H3C4 11 4 7.500 2.500 3.500Z" fill="#1d9a8a"/><path d="M15 3.500V26.500M3 15H27" stroke="#e04a3a" stroke-width="1"/></svg><svg style="left:639.4px;top:806.6px" width="30" height="30" viewBox="0 0 30 30"><path d="M2.500 3.500C6 5 10.500 5 15 3.500C19.500 5 24 5 27.500 3.500C26 7.500 26 11 27 15C26 19 26 22.500 27.500 26.500C24 25 19.500 25 15 26.500C10.500 25 6 25 2.500 26.500C4 22.500 4 19 3 15C4 11 4 7.500 2.500 3.500Z" fill="#2a9a50" stroke="#e04a3a" stroke-width="1"/><path d="M15 3.500C19.500 5 24 5 27.500 3.500C26 7.500 26 11 27 15H15Z" fill="#2a9fc4"/><path d="M15 15H27C26 19 26 22.500 27.500 26.500C24 25 19.500 25 15 26.500Z" fill="#9ccc3c"/><path d="M2.500 3.500C6 5 10.500 5 15 3.500V15H3C4 11 4 7.500 2.500 3.500Z" fill="#1d9a8a"/><path d="M15 3.500V26.500M3 15H27" stroke="#e04a3a" stroke-width="1"/></svg><svg style="left:674.6px;top:806.6px" width="30" height="30" viewBox="0 0 30 30"><defs><linearGradient id="ad" x1="0" y1="0" x2="0" y2="1"><stop offset="0" stop-color="#7a5a5e"/><stop offset="1" stop-color="#3c2a2d"/></linearGradient></defs><rect x="1" y="1" width="28.500" height="28.500" rx="1.500" fill="url(#ad)" stroke="#2a1c1e" stroke-width=".6"/><rect x="1" y="1" width="28.500" height="1.600" fill="#d8d0d0" opacity=".8"/><path d="M6 25C9.500 23 13.500 16.500 15 10C15.500 7.700 14 7 13.700 9C13.300 13 18 20 23.500 21C26 21.300 25.500 19.500 23 19.500C18 19.500 9.500 22.500 6 25Z" fill="none" stroke="#f4eeee" stroke-width="1.300"/></svg><svg style="left:709.6px;top:806.6px" width="30" height="30" viewBox="0 0 30 30"><rect x="1.500" y="2" width="27" height="26.500" fill="#4a1030" stroke="#f0389e" stroke-width="1.800"/><text x="15" y="21.500" font-family="Liberation Sans" font-size="14.500" font-weight="bold" fill="#f0389e" text-anchor="middle">Id</text></svg><div class="a" style="left:723.4px;top:839.600px;width:2.400px;height:2.400px;border-radius:50%;background:#111"></div><svg style="left:744.6px;top:806.6px" width="30" height="30" viewBox="0 0 30 30"><rect x="1.500" y="2" width="27" height="26.500" fill="#3a2208" stroke="#f5a623" stroke-width="1.800"/><text x="15" y="21.500" font-family="Liberation Sans" font-size="14.500" font-weight="bold" fill="#f9b440" text-anchor="middle">Ai</text></svg><div class="a" style="left:758.4px;top:839.600px;width:2.400px;height:2.400px;border-radius:50%;background:#111"></div><svg style="left:779.8px;top:806.6px" width="30" height="30" viewBox="0 0 30 30"><rect x="1.500" y="2" width="27" height="26.500" fill="#1b1f5e" stroke="#7fb4f5" stroke-width="1.800"/><text x="15" y="21.500" font-family="Liberation Sans" font-size="14.500" font-weight="bold" fill="#8ec0ff" text-anchor="middle">Ps</text></svg><div class="a" style="left:793.6px;top:839.600px;width:2.400px;height:2.400px;border-radius:50%;background:#111"></div><svg style="left:815px;top:806.6px" width="30" height="30" viewBox="0 0 30 30"><rect x="1.500" y="2" width="27" height="26.500" fill="#33260a" stroke="#e8b020" stroke-width="1.800"/><text x="15" y="21.500" font-family="Liberation Sans" font-size="14.500" font-weight="bold" fill="#f0bd2e" text-anchor="middle">Br</text></svg><div class="a" style="left:828.8px;top:839.600px;width:2.400px;height:2.400px;border-radius:50%;background:#111"></div><svg style="left:849.7px;top:806.6px" width="30" height="30" viewBox="0 0 30 30"><defs><linearGradient id="ms" x1="0" y1="0" x2="0" y2="1"><stop offset="0" stop-color="#5fc0fb"/><stop offset="1" stop-color="#2a86ee"/></linearGradient></defs><path d="M14 2.500C21.500 2.500 27 7 27 13C27 19 21.500 23.500 14 23.500C12.500 23.500 11.200 23.300 10 23C8.500 25 6 26.500 3.500 26.500C5 25 5.800 23 5.600 21C2.800 19 1 16.200 1 13C1 7 6.500 2.500 14 2.500Z" fill="url(#ms)"/><ellipse cx="20" cy="20.500" rx="8.500" ry="6.500" fill="#f4f6f9"/><path d="M25 25L28 28.500L23 26.500Z" fill="#f4f6f9"/><circle cx="16.200" cy="20.500" r="1.300" fill="#2a5fc8"/><circle cx="20" cy="20.500" r="1.300" fill="#2a5fc8"/><circle cx="23.800" cy="20.500" r="1.300" fill="#2a5fc8"/></svg><div class="a" style="left:863.5px;top:839.600px;width:2.400px;height:2.400px;border-radius:50%;background:#111"></div><svg style="left:884.8px;top:806.6px" width="30" height="30" viewBox="0 0 30 30"><rect x="1.500" y="2" width="27" height="27" rx="1.500" fill="#d8392b"/><rect x="6" y="8" width="14" height="10" rx="1" fill="none" stroke="#f4d6d2" stroke-width="1.300"/><path d="M10 21.500H16M13 18V21.500" stroke="#f4d6d2" stroke-width="1.300"/><circle cx="20" cy="19" r="5" fill="#d8392b" stroke="#f4d6d2" stroke-width="1.200"/><path d="M17.800 17.500L19.500 19L17.800 20.500M22.200 17.500L20.500 19L22.200 20.500" stroke="#f4d6d2" stroke-width="1" fill="none"/></svg><div class="a" style="left:898.6px;top:839.600px;width:2.400px;height:2.400px;border-radius:50%;background:#111"></div><svg style="left:920.7px;top:806.6px" width="30" height="30" viewBox="0 0 30 30"><g transform="rotate(-5 15 15)"><rect x="4" y="2.500" width="21" height="26" fill="#fbfbfb" stroke="#cfcfcf" stroke-width=".7"/><g stroke="#d4d4d4" stroke-width=".6"><path d="M5 6H24M5 8.500H24M5 11H24M5 13.500H24M5 16H24M5 18.500H24M5 21H24M5 23.500H24M5 26H24"/></g><path d="M7 2.500V28.500" stroke="#f0b0b0" stroke-width=".6"/></g><path d="M26.500 2L19.500 27L18.800 29L20.800 27.500L28 2.800Z" fill="#8a9fb8" stroke="#5d6f88" stroke-width=".5"/></svg><svg style="left:954.8px;top:804px" width="33" height="33" viewBox="0 0 30 30"><path d="M9 6L22 1.500L29 6.500V19L16 24L9 18Z" fill="#7a62c9"/><path d="M9 6L22 1.500L29 6.500L16 11Z" fill="#d9d4ea"/><path d="M16 11L29 6.500V19L16 24Z" fill="#6a52b8"/><path d="M21 13L25 11.500V16L21 17.500Z" fill="#b9aee6"/><path d="M1.500 14L9 11.500L16 15.500V25L8.500 28L1.500 23.500Z" fill="#f4b21e"/><path d="M1.500 14L9 11.500L16 15.500L8.500 18.500Z" fill="#fbd25a"/><path d="M2.500 16L7.500 19V22L2.500 19.500Z" fill="#6a4a18"/><path d="M9.500 19.500L15 17V20.500L9.500 23Z" fill="#6a4a18"/><ellipse cx="5" cy="25" rx="2" ry="2.400" fill="#222"/><ellipse cx="13" cy="26.300" rx="2" ry="2.400" fill="#222"/><ellipse cx="24" cy="22.500" rx="2" ry="2.400" fill="#222"/></svg><svg style="left:989.4px;top:805px" width="32" height="32" viewBox="0 0 30 30"><path d="M1 29V14C1 5.500 7 1 15 1C23 1 29 5.500 29 14V29H22.500V15C22.500 10 19.500 7.500 15 7.500C10.500 7.500 7.500 10 7.500 15V29Z" fill="#6b7d91" stroke="#4f6072" stroke-width=".8"/><path d="M7.500 29V15C7.500 10 10.500 7.500 15 7.500C19.500 7.500 22.500 10 22.500 15V29Z" fill="#8e8e8e"/><path d="M12 29V20C12 17 18 17 18 20V29Z" fill="#d9d9d9"/><rect x="11" y="2.500" width="8" height="3.500" rx="1.500" fill="#3d4b5a"/><text x="15" y="5.400" font-family="Liberation Sans" font-size="3" fill="#ddd" text-anchor="middle">VPN</text></svg><svg style="left:1025.7px;top:806.6px" width="30" height="30" viewBox="0 0 30 30"><defs><linearGradient id="tv" x1="0" y1="0" x2="0" y2="1"><stop offset="0" stop-color="#2aa0f5"/><stop offset="1" stop-color="#0e6fd8"/></linearGradient></defs><rect x="1.500" y="1.500" width="27" height="27.500" rx="2" fill="url(#tv)"/><circle cx="15" cy="15.500" r="10.500" fill="#fff"/><path d="M5.500 15.500L11.500 11V14H18.500V11L24.500 15.500L18.500 20V17H11.500V20Z" fill="#0e6fd8"/></svg><div class="a" style="left:1039.5px;top:839.600px;width:2.400px;height:2.400px;border-radius:50%;background:#111"></div><svg style="left:1061px;top:806.6px" width="30" height="30" viewBox="0 0 30 30"><ellipse cx="15" cy="17" rx="13" ry="8.500" fill="none" stroke="#e8731c" stroke-width="2.200"/><path d="M4 2H9.500L26.500 28.500H21Z" fill="#111"/><path d="M23 2H26.500L8 28.500H4.500Z" fill="#111"/></svg><div class="a" style="left:1074.8px;top:839.600px;width:2.400px;height:2.400px;border-radius:50%;background:#111"></div><div class="a" style="left:1101px;top:809px;width:1px;height:30px;background:#7f7f7f"></div><svg style="left:1111.8px;top:806.6px" width="30" height="30" viewBox="0 0 30 30"><path d="M5 1.500H21L25.500 6V28.500H5Z" fill="#fafafa" stroke="#c9c9c9" stroke-width=".7"/><path d="M21 1.500V6H25.500Z" fill="#5fa8e8"/><rect x="12.500" y="2.500" width="3.500" height="15" rx="1" fill="#333"/><path d="M13 5H15.500M13 7.500H15.500M13 10H15.500M13 12.500H15.500" stroke="#aaa" stroke-width=".7"/><text x="15" y="26" font-family="Liberation Sans" font-size="3.800" fill="#888" text-anchor="middle">ZIP</text></svg><svg style="left:1147.4px;top:806.6px" width="30" height="30" viewBox="0 0 30 30"><rect x=".5" y="7" width="29" height="16.500" fill="#f4f4f4" stroke="#cfcfcf" stroke-width=".6"/><rect x="1.500" y="8" width="27" height="2" fill="#e0e0e0"/><g stroke="#9a9a9a" stroke-width=".5"><path d="M9 12H21M9 13.500H21M9 15H21M9 16.500H21M9 18H21M9 19.500H21"/></g><rect x="2" y="11" width="5" height="11" fill="#e6e6e6"/></svg><svg style="left:1180.5px;top:803.5px" width="34" height="34" viewBox="0 0 30 30"><defs><linearGradient id="tr" x1="0" y1="0" x2="1" y2="0"><stop offset="0" stop-color="#c4c4c4"/><stop offset=".5" stop-color="#f1f1f1"/><stop offset="1" stop-color="#bdbdbd"/></linearGradient></defs><path d="M4.500 6.500H25.500L23.500 28C23.400 29 22.500 29.500 21.500 29.500H8.500C7.500 29.500 6.600 29 6.500 28Z" fill="url(#tr)" stroke="#a8a8a8" stroke-width=".6" opacity=".95"/><ellipse cx="15" cy="6.500" rx="10.500" ry="2.800" fill="#e4e4e4" stroke="#a0a0a0" stroke-width=".7"/><path d="M7 6C9 2.500 12 1.500 14 4C16 1 20 1.500 23 5.500C20 7.500 10 7.500 7 6Z" fill="#d8d8d8" stroke="#999" stroke-width=".5"/><circle cx="11" cy="4.500" r="1.100" fill="#c44"/><circle cx="17.500" cy="3.800" r="1" fill="#48a"/><circle cx="14.500" cy="5.200" r=".9" fill="#5a5"/><g stroke="#c9c9c9" stroke-width=".5" opacity=".8"><path d="M9 10L10 27M12 10L12.500 27M15 10V27M18 10L17.500 27M21 10L20 27"/></g></svg>
